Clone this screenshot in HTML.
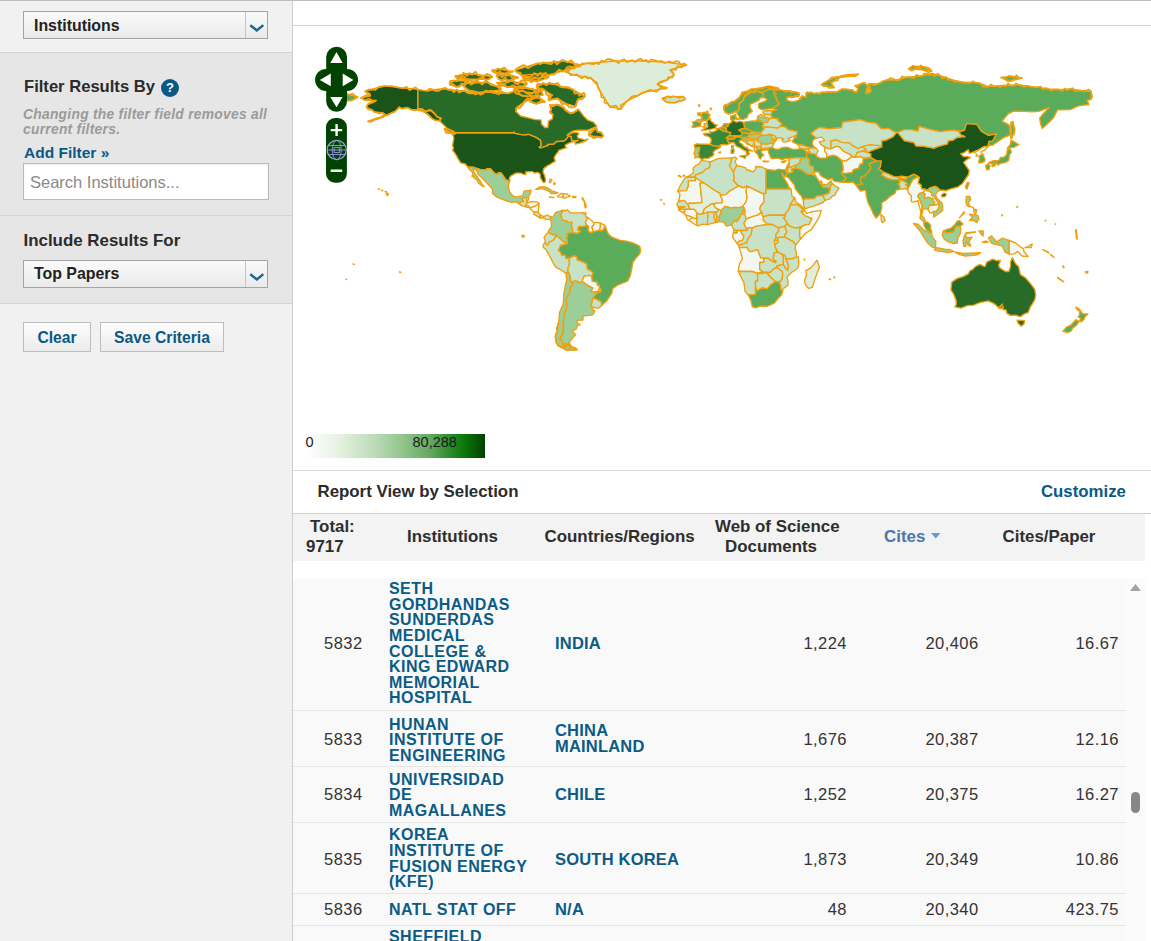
<!DOCTYPE html>
<html><head><meta charset="utf-8">
<style>
*{box-sizing:border-box;margin:0;padding:0}
html,body{width:1151px;height:941px;overflow:hidden;background:#fff;font-family:"Liberation Sans",sans-serif;color:#333}
.a{position:absolute;white-space:nowrap}
#side{position:absolute;left:0;top:0;width:293px;height:941px;background:#f1f1f1;border-right:1px solid #cdcdcd}
.sec{position:absolute;left:0;width:292px;background:#e6e6e6;border-top:1px solid #d2d2d2}
.sel{position:absolute;left:23px;width:245px;height:28px;border:1px solid #a4a4a4;background:linear-gradient(#fafafa,#eaeaea)}
.sel .t{position:absolute;left:10px;top:4px;font-weight:bold;font-size:15.9px;color:#222}
.sel .btn{position:absolute;right:0;top:0;width:22px;height:26px;border-left:1px solid #c4c4c4}
.b{font-weight:bold}
.blue{color:#0a5985}
.btnx{position:absolute;height:30px;border:1px solid #bdbdbd;background:linear-gradient(#fdfdfd,#ececec);font-weight:bold;font-size:15.7px;color:#0a5985;text-align:center;line-height:28px}
.hd{font-weight:bold;font-size:16.9px;color:#2e2e2e}
.row{position:absolute;left:293px;width:833px;background:#f9f9f9;border-bottom:1px solid #e6e6e6}
.num{font-size:16.5px;letter-spacing:0.45px;color:#333}
.inst{font-weight:bold;font-size:16px;letter-spacing:0.45px;color:#0b5b87}
.ctry{font-weight:bold;font-size:16.5px;letter-spacing:0.2px;color:#0b5b87}
</style></head><body>
<div id="side">
  <div style="position:absolute;left:0;top:0;width:293px;height:1px;background:#bdbdbd"></div>
  <div class="sel" style="top:11px"><span class="t a" style="top:5px">Institutions</span><span class="btn"><svg width="22" height="26" style="position:absolute;left:0;top:0"><path d="M4.3 13.3 L10.8 18.4 L17.3 13.1" fill="none" stroke="#1a6593" stroke-width="2.5"/></svg></span></div>
  <div class="sec" style="top:52px;height:164px">
    <div class="a b" style="left:24px;top:24px;font-size:16.6px;color:#2b2b2b">Filter Results By</div>
    <div class="a" style="left:161px;top:26.3px;width:18px;height:18px;border-radius:50%;background:#0a5886;color:#fff;font-weight:bold;font-size:13px;text-align:center;line-height:18px">?</div>
    <div class="a b" style="left:23px;top:53.8px;font-size:13.8px;letter-spacing:0.28px;font-style:italic;color:#9a9a9a;line-height:15.6px;white-space:normal;width:268px">Changing the filter field removes all current filters.</div>
    <div class="a b blue" style="left:24px;top:90.5px;font-size:15.5px">Add Filter »</div>
    <div class="a" style="left:23px;top:110px;width:246px;height:37px;border:1px solid #b9b9b9;background:#fff;box-shadow:inset 0 1px 2px rgba(0,0,0,.08)"><span class="a" style="left:6px;top:9px;font-size:16.5px;color:#8a8a8a">Search Institutions...</span></div>
  </div>
  <div class="sec" style="top:215px;height:89px">
    <div class="a b" style="left:23.5px;top:14.6px;font-size:16.9px;color:#2b2b2b">Include Results For</div>
    <div class="sel" style="top:44.4px;height:28px"><span class="t a">Top Papers</span><span class="btn"><svg width="22" height="26" style="position:absolute;left:0;top:0"><path d="M4.3 13.3 L10.8 18.4 L17.3 13.1" fill="none" stroke="#1a6593" stroke-width="2.5"/></svg></span></div>
  </div>
  <div style="position:absolute;left:0;top:303px;width:292px;height:1px;background:#d2d2d2"></div>
  <div class="btnx" style="left:23px;top:322px;width:68px;line-height:30px">Clear</div>
  <div class="btnx" style="left:100px;top:322px;width:124px;line-height:30px">Save Criteria</div>
</div>

<div style="position:absolute;left:293px;top:0;width:858px;height:1px;background:#bdbdbd"></div>
<div style="position:absolute;left:293px;top:25px;width:858px;height:1px;background:#d4d4d4"></div>

<!-- MAP -->
<div id="map" style="position:absolute;left:293px;top:26px;width:858px;height:444px;overflow:hidden">
<!--MAP--><svg width="858" height="444" style="position:absolute;left:0;top:0"><g stroke="#f0a00c" stroke-width="1.35" stroke-linejoin="round"><path fill="#1b5418" d="M159.1 107.9 162.2 106.7 221.1 106.7 221.1 105.9 222.2 107.3 228.7 108.6 232.7 108.8 235.2 108.2 242.8 111.1 244.2 111.9 247.6 114.4 248.4 119.2 246.3 121.3 247.6 121.9 254.9 119.4 254.5 118.4 260.8 118.0 263.3 115.5 270.7 115.0 272.3 114.2 275.5 110.0 278.4 110.7 278.4 113.6 280.1 115.5 275.9 117.1 272.3 119.0 272.6 121.7 273.8 121.7 270.7 122.6 265.6 124.5 265.2 125.9 263.5 127.8 262.1 129.9 261.2 132.0 262.3 135.3 259.6 136.6 257.0 138.5 254.5 139.7 250.7 142.6 249.9 145.8 251.6 149.5 252.6 153.7 252.0 156.4 250.5 156.6 249.1 154.6 247.2 151.4 247.2 148.1 244.7 146.4 241.5 147.0 239.2 145.6 235.9 145.6 232.7 146.0 233.1 148.5 230.6 148.3 227.7 147.2 223.7 147.0 221.4 147.9 217.6 150.2 216.4 152.0 216.8 155.0 212.8 153.9 210.3 150.2 208.0 146.8 205.2 147.0 204.0 148.5 201.5 147.2 197.3 142.6 193.7 142.6 193.7 143.7 187.6 143.7 179.9 141.2 175.0 141.2 172.3 138.0 167.7 136.8 165.0 132.6 163.7 130.1 161.0 125.9 159.7 124.7 160.4 121.5 159.5 119.6 160.8 112.5 160.4 110.2ZM124.9 63.5 119.7 62.6 110.2 62.2 101.9 60.9 92.2 60.1 85.1 61.5 78.8 63.4 72.1 65.1 76.7 67.6 77.3 69.9 68.1 72.0 72.5 74.3 83.0 74.5 79.8 76.4 74.6 78.5 73.5 81.4 78.8 83.7 80.9 85.8 89.3 86.6 91.4 87.9 87.2 92.1 80.9 94.2 75.0 95.4 81.9 92.9 89.3 90.4 97.7 87.3 102.1 85.4 106.1 81.2 109.2 82.7 114.0 81.6 118.6 83.7 124.9 83.7 128.1 84.5 132.3 86.6 135.4 88.9 138.6 92.1 141.7 94.2 146.7 94.8 148.0 92.3 144.2 90.8 140.9 87.0 137.5 84.1 134.4 84.7 132.3 85.4 128.9 83.0 124.9 83.1Z"/><path fill="#286b28" d="M162.0 106.7 158.9 104.6 154.3 102.9 152.2 100.4 148.0 96.2 146.7 94.8 148.0 92.3 144.2 90.8 140.9 87.0 137.5 84.1 134.4 84.7 132.3 85.4 128.9 83.0 124.9 83.1 124.9 63.5 134.4 65.1 139.6 63.6 149.0 62.8 158.5 63.8 169.0 64.9 179.4 67.0 194.1 65.9 202.5 67.0 215.1 67.4 219.3 65.9 223.5 63.8 231.9 65.9 240.3 67.0 243.4 63.8 248.6 64.9 249.7 69.1 239.2 70.1 238.2 73.2 230.8 76.4 223.5 81.6 223.1 85.8 227.7 90.0 236.1 92.1 242.4 93.7 248.0 93.9 248.6 98.3 251.8 101.5 254.9 101.5 255.4 95.2 259.1 93.1 260.0 88.9 257.0 86.2 258.1 83.7 257.0 78.9 265.4 78.9 270.7 81.6 274.9 85.8 280.1 86.8 284.3 84.1 285.3 83.1 290.6 90.0 294.8 94.2 300.4 96.2 303.8 100.0 301.1 101.7 294.8 104.2 286.4 104.2 281.1 104.6 277.0 106.7 273.8 109.2 280.1 106.7 284.3 106.5 286.0 107.7 284.3 109.8 284.9 111.9 291.6 113.8 294.8 113.0 292.7 115.0 286.4 117.1 282.6 118.2 281.8 116.1 285.3 114.4 280.1 114.8 278.4 113.6 278.4 110.7 275.5 110.0 272.3 114.2 270.7 115.0 263.3 115.5 260.8 118.0 254.5 118.4 254.9 119.4 247.6 121.9 246.3 121.3 248.4 119.2 247.6 114.4 244.2 111.9 242.8 111.1 235.2 108.2 232.7 108.8 228.7 108.6 222.2 107.3 221.1 105.9 221.1 106.7ZM244.5 57.8 259.1 57.8 278.2 62.8 292.1 70.3 285.1 73.2 282.6 80.4 273.0 77.6 264.4 72.4 255.8 74.3 259.1 69.1 252.2 64.7 246.1 62.8ZM156.6 58.6 161.0 54.6 175.7 55.1 172.1 59.0 162.7 60.7ZM170.4 57.6 183.4 56.3 195.6 56.7 203.6 60.3 207.8 63.8 195.6 65.5 184.3 66.4 174.8 63.8 171.3 61.1ZM162.2 49.8 176.5 47.3 199.2 50.7 195.6 53.4 173.2 53.0 162.7 50.7ZM198.7 44.2 207.8 43.4 219.9 45.5 213.0 47.3 200.8 45.9ZM203.6 49.8 216.6 48.6 225.2 51.5 218.2 54.2 206.1 53.4ZM222.0 44.2 244.5 37.3 272.1 35.2 286.2 38.8 272.1 44.2 258.3 48.4 244.5 52.6 230.4 51.3ZM230.4 49.2 252.8 47.1 255.6 51.3 244.5 55.5 231.9 54.4ZM203.6 56.7 216.6 55.1 234.0 57.6 230.4 62.0 216.6 61.1 207.8 59.5ZM220.8 62.8 234.0 62.0 247.0 65.5 242.6 70.7 229.6 69.9 222.6 67.2ZM239.2 71.6 246.5 71.6 251.8 75.8 243.4 77.8 237.1 75.3ZM296.0 109.6 303.2 101.3 304.4 105.6 308.2 106.5 310.3 109.8 308.4 111.7 304.2 110.7 298.1 109.8ZM162.0 108.2 157.4 106.9 151.6 102.9 154.3 102.7 160.6 105.6Z"/><path fill="#dcedd9" d="M272.1 45.9 283.7 40.4 294.8 37.1 322.7 35.0 350.4 35.0 374.0 36.3 393.5 39.0 377.0 44.0 381.0 48.8 374.0 54.2 364.4 58.4 374.0 62.0 351.8 66.1 344.9 69.7 333.8 75.1 328.1 82.9 317.0 80.8 311.6 72.4 307.4 65.5 304.6 59.9 297.5 51.7 280.9 48.8Z"/><path fill="#c7e2c6" d="M369.2 72.2 374.5 70.3 382.9 70.7 390.2 70.5 392.3 73.2 389.1 74.7 381.4 76.6 373.0 75.8 370.3 73.7Z"/><path fill="#9ccf97" d="M175.0 141.2 179.9 141.2 187.6 143.7 193.7 143.7 193.7 142.6 197.3 142.6 201.5 147.2 204.0 148.5 205.2 147.0 208.0 146.8 210.3 150.2 212.8 153.9 216.8 155.0 215.7 158.3 215.5 162.3 216.8 166.0 219.3 169.4 222.4 171.1 227.7 170.2 229.8 169.4 231.0 165.2 238.2 164.2 237.1 168.3 235.4 170.4 233.7 171.9 229.8 171.9 229.8 173.0 228.9 173.0 230.9 175.5 228.2 175.5 227.2 177.2 227.2 178.7 223.7 175.9 218.2 176.4 214.0 175.0 208.8 173.2 203.6 170.9 199.4 167.3 199.8 164.2 198.3 161.7 193.1 156.4 189.9 152.7 185.3 148.5 183.6 144.3 179.9 142.6 180.9 146.0 183.0 148.9 185.3 152.7 187.2 154.8 189.1 158.5 191.2 160.6 189.3 160.0 185.5 157.3 184.3 154.3 181.1 152.0 181.3 150.6 179.0 150.6 179.9 146.6 175.9 143.3Z"/><path fill="#c7e2c6" d="M227.2 178.7 227.2 177.2 228.2 175.5 230.9 175.5 228.9 173.0 229.8 173.0 229.8 171.9 233.7 171.9 233.7 175.9 235.6 176.3 233.5 177.8 233.2 179.0 231.7 180.4 228.9 179.9Z"/><path fill="#f2f7f1" d="M233.7 171.6 235.4 170.4 235.9 172.5 234.2 175.9 233.7 175.9Z"/><path fill="#f2f7f1" d="M233.2 179.0 233.5 177.8 235.6 176.3 240.3 175.7 244.5 176.1 246.2 177.8 242.4 179.8 238.8 181.3 237.5 182.0 236.5 181.1 235.0 180.0Z"/><path fill="#f2f7f1" d="M231.7 180.4 233.2 179.0 235.0 180.0 236.5 181.1 234.4 181.5Z"/><path fill="#f2f7f1" d="M237.5 182.0 238.8 181.3 242.4 179.8 246.2 177.8 245.5 181.9 245.1 186.1 240.9 185.9 239.2 184.4 236.7 182.1Z"/><path fill="#c7e2c6" d="M240.9 185.9 245.1 186.1 247.4 189.0 246.8 192.2 244.5 190.3 240.7 188.2Z"/><path fill="#c7e2c6" d="M246.8 192.2 247.4 189.0 250.7 190.7 253.9 189.0 258.3 190.9 258.7 192.6 256.2 193.4 252.8 193.6 251.8 192.2 248.6 192.0Z"/><path fill="#9ccf97" d="M242.6 163.3 246.5 161.2 250.7 160.6 254.9 162.1 259.1 164.8 265.0 166.9 262.3 167.5 257.7 167.5 257.0 165.8 251.8 163.5 250.3 162.9 248.2 162.7 245.3 163.3Z"/><path fill="#f2f7f1" d="M264.4 170.6 267.9 167.5 270.2 167.7 270.2 171.5 268.6 171.1 264.6 170.9Z"/><path fill="#f2f7f1" d="M270.2 167.7 273.8 167.9 277.4 170.2 273.8 171.1 270.9 172.3 270.2 171.5Z"/><path fill="#f2f7f1" d="M256.2 170.9 260.8 171.5 259.6 171.7 256.4 171.1Z"/><path fill="#f2f7f1" d="M279.7 170.4 283.0 170.6 282.8 171.5 279.7 171.5Z"/><path fill="#f2f7f1" d="M257.0 153.1 259.1 153.7 257.5 156.8 256.4 156.4ZM261.2 156.2 262.3 157.9 260.8 158.5Z"/><path fill="#f2f7f1" d="M288.9 172.3 289.7 171.7 292.3 177.1 293.1 179.8 292.9 181.9 292.1 181.7 291.6 178.6 291.2 175.7Z"/><path fill="#9ccf97" d="M258.3 190.9 259.3 192.0 260.8 189.7 262.3 186.9 265.0 185.7 266.9 185.5 269.2 184.2 271.1 184.3 269.0 185.9 267.9 190.1 268.8 191.5 268.8 193.6 271.7 194.5 273.6 194.6 275.1 196.4 279.1 196.1 278.4 198.7 279.5 202.0 279.5 204.5 280.3 206.6 274.9 207.4 273.8 207.8 274.9 210.1 273.8 211.2 274.6 217.9 272.3 217.0 268.6 214.1 266.3 211.8 262.7 209.3 258.3 208.3 255.4 206.2 255.8 204.1 258.5 200.7 258.3 195.7 257.2 194.1Z"/><path fill="#c7e2c6" d="M271.1 184.3 273.4 184.9 274.2 183.6 277.6 186.9 282.0 186.9 286.4 186.9 290.6 186.7 292.7 188.2 292.7 190.9 294.8 191.3 293.5 194.1 292.5 196.6 293.3 198.2 294.6 199.7 288.9 200.7 285.8 200.5 284.7 204.1 287.7 204.5 286.4 206.6 283.2 207.6 280.3 206.6 279.5 204.5 279.5 202.0 278.4 198.7 279.1 196.1 275.1 196.4 273.6 194.6 271.7 194.5 268.8 193.6 268.8 191.5 267.9 190.1 269.0 185.9Z"/><path fill="#f2f7f1" d="M294.8 191.3 297.9 194.1 300.7 196.6 300.9 198.7 299.0 200.7 300.2 205.8 297.3 206.6 295.4 205.3 295.0 203.0 295.6 200.9 294.6 199.7 293.3 198.2 292.5 196.6 293.5 194.1Z"/><path fill="#f2f7f1" d="M300.7 196.6 305.3 196.6 307.4 197.2 307.4 201.6 306.1 204.3 303.0 205.1 300.2 205.8 299.0 200.7 300.9 198.7Z"/><path fill="#f2f7f1" d="M307.4 197.2 311.6 199.1 312.4 200.5 309.7 204.5 306.1 204.3 307.4 201.6Z"/><path fill="#c7e2c6" d="M255.4 206.2 252.6 209.1 251.0 211.4 252.2 214.3 252.2 216.2 252.8 218.1 254.7 219.3 256.2 216.2 260.0 214.5 262.7 211.0 262.7 209.3 258.3 208.3Z"/><path fill="#c7e2c6" d="M252.2 216.2 250.1 218.9 250.3 221.6 253.3 224.1 256.6 230.0 260.6 237.9 262.9 241.3 268.6 244.2 273.0 247.5 274.9 245.9 275.1 241.7 276.3 239.0 276.5 235.2 274.6 232.0 272.6 232.1 272.6 229.0 268.8 229.0 267.1 225.4 265.4 224.6 267.5 219.5 273.8 217.9 274.6 217.9 272.3 217.0 268.6 214.1 266.3 211.8 262.7 209.3 262.7 211.0 260.0 214.5 256.2 216.2 254.7 219.3 252.8 218.1Z"/><path fill="#5aab5a" d="M312.4 200.5 314.1 205.3 315.8 208.5 318.9 211.2 327.3 214.3 333.6 215.2 339.9 216.8 346.6 220.0 347.6 224.0 346.8 227.9 343.0 232.1 339.9 236.3 338.8 242.5 337.3 249.9 334.6 255.1 330.0 257.0 325.2 258.8 319.9 262.4 318.7 267.6 315.8 271.8 313.7 274.9 308.6 279.6 308.2 275.8 304.0 273.7 299.8 272.2 303.6 267.4 308.0 265.3 307.8 262.6 306.1 262.6 306.7 259.3 304.4 259.3 303.8 256.1 299.2 255.3 298.6 250.5 300.0 247.1 298.6 245.3 294.2 243.2 293.7 237.9 290.6 236.3 287.7 235.2 284.3 234.0 283.5 230.6 280.9 229.8 276.5 232.3 274.6 232.0 272.6 232.1 272.6 229.0 268.8 229.0 267.1 225.4 265.4 224.6 267.5 219.5 273.8 217.9 274.6 217.9 273.8 211.2 274.9 210.1 273.8 207.8 274.9 207.4 280.3 206.6 283.2 207.6 286.4 206.6 287.7 204.5 284.7 204.1 285.8 200.5 288.9 200.7 294.6 199.7 295.6 200.9 295.0 203.0 295.4 205.3 297.3 206.6 300.2 205.8 303.0 205.1 306.1 204.3 309.7 204.5Z"/><path fill="#c7e2c6" d="M274.6 232.0 276.5 232.3 280.9 229.8 283.5 230.6 284.3 234.0 287.7 235.2 290.6 236.3 293.7 237.9 294.2 243.2 298.6 245.3 300.0 247.1 298.6 250.5 296.7 249.4 291.2 250.1 290.0 253.0 289.3 255.7 285.8 256.8 284.3 255.3 281.6 254.7 279.9 256.5 278.4 257.0 277.6 254.0 276.7 249.2 275.7 246.7 274.9 245.9 275.1 241.7 276.3 239.0 276.5 235.2Z"/><path fill="#f2f7f1" d="M298.6 250.5 299.2 255.3 303.8 256.1 304.4 259.3 306.7 259.3 306.1 262.6 305.7 264.9 303.2 266.2 297.7 265.7 299.8 262.2 294.8 259.3 289.3 255.7 290.0 253.0 291.2 250.1 296.7 249.4Z"/><path fill="#c7e2c6" d="M308.6 279.6 305.5 282.1 302.7 282.0 299.4 281.0 298.1 279.1 298.8 276.0 299.8 272.2 304.0 273.7 308.2 275.8Z"/><path fill="#9ccf97" d="M285.8 256.8 289.3 255.7 294.8 259.3 299.8 262.2 297.7 265.7 303.2 266.2 305.7 264.9 308.0 265.3 303.6 267.4 299.8 272.2 298.8 276.0 298.1 279.1 297.9 281.2 300.7 284.1 301.7 285.2 299.8 288.9 290.0 290.2 290.0 294.0 284.3 294.4 284.1 296.9 287.2 298.6 284.3 300.0 283.2 303.1 279.1 305.2 282.6 308.8 278.4 313.4 275.9 316.9 277.2 318.4 269.8 317.8 269.0 315.1 266.9 312.1 268.8 309.2 269.8 306.9 270.2 303.1 270.5 300.0 270.0 297.1 270.7 292.7 271.3 287.7 273.0 284.3 273.8 278.1 272.8 273.9 274.2 270.8 276.7 265.9 277.4 261.1 279.5 259.3 279.9 256.5 281.6 254.7 284.3 255.3ZM276.7 319.0 284.1 323.6 280.1 324.0 276.7 323.8Z"/><path fill="#9ccf97" d="M273.0 247.5 273.6 253.8 272.6 258.4 270.7 268.7 270.2 278.1 266.5 286.4 266.1 292.7 265.6 296.5 264.8 299.8 264.4 305.2 262.3 310.5 263.3 316.7 265.4 319.9 270.7 321.5 273.8 319.9 277.2 318.4 269.8 317.8 269.0 315.1 266.9 312.1 268.8 309.2 269.8 306.9 270.2 303.1 270.5 300.0 270.0 297.1 270.7 292.7 271.3 287.7 273.0 284.3 273.8 278.1 272.8 273.9 274.2 270.8 276.7 265.9 277.4 261.1 279.5 259.3 279.9 256.5 278.4 257.0 277.6 254.0 276.7 249.2 275.7 246.7 274.9 245.9ZM276.7 319.0 276.7 323.8 272.8 324.0 267.5 320.9 273.8 319.5Z"/><path fill="#c7e2c6" d="M228.7 209.5 230.4 209.1 231.5 210.8 229.4 211.2Z"/><path fill="#f2f7f1" d="M290.8 188.0 292.7 186.5 292.7 188.0Z"/><path fill="#5aab5a" d="M435.3 87.9 438.4 87.3 442.6 85.4 444.5 85.8 446.2 82.7 446.4 80.1 446.0 77.4 450.0 74.5 451.0 71.8 455.2 68.0 458.3 65.9 463.7 64.8 466.7 65.9 470.9 65.5 474.7 63.6 479.1 62.6 481.2 64.8 485.4 63.6 485.6 62.2 479.3 60.7 474.7 60.3 464.6 62.4 458.3 63.2 452.1 65.9 447.9 69.1 445.8 72.2 441.6 75.3 436.3 77.4 431.1 79.5 431.1 83.7 432.1 86.0Z"/><path fill="#5aab5a" d="M444.5 85.8 443.9 86.8 445.8 90.0 447.4 93.1 450.4 93.3 454.2 91.4 455.4 88.1 459.4 85.2 457.3 82.2 456.9 78.5 461.5 76.4 465.7 74.3 467.2 71.8 471.2 71.6 470.1 70.1 470.7 67.8 463.7 64.8 458.3 65.9 455.2 68.0 451.0 71.8 450.0 74.5 446.0 77.4 446.4 80.1 446.2 82.7Z"/><path fill="#5aab5a" d="M471.2 71.6 470.1 70.1 470.7 67.8 463.7 64.8 466.7 65.9 470.9 65.5 474.7 63.6 479.1 62.6 481.2 64.8 480.4 67.0 483.5 67.6 481.4 69.3 483.7 71.8 483.3 73.7 486.7 77.6 482.5 80.6 478.9 82.7 474.1 83.1 468.4 83.7 465.5 81.6 465.7 77.4 472.0 75.3 474.1 73.2Z"/><path fill="#5aab5a" d="M437.6 90.4 442.8 88.5 442.6 91.0 443.5 91.4 441.4 94.2 440.3 94.5 438.6 94.4 437.6 93.1ZM443.7 93.7 447.0 92.9 447.0 92.1 444.1 92.3Z"/><path fill="#286b28" d="M408.6 104.5 413.3 104.0 418.5 103.1 423.5 102.1 422.5 100.8 424.3 99.2 421.2 98.1 420.4 97.1 417.9 95.0 417.2 92.9 416.0 92.7 414.3 94.2 413.7 94.4 414.3 96.4 414.3 97.5 414.7 100.4 414.3 101.3 411.2 102.5Z"/><path fill="#c7e2c6" d="M414.3 97.5 411.0 97.7 411.8 99.8 409.5 100.8 412.2 101.3 414.3 101.3 414.7 100.4Z"/><path fill="#5aab5a" d="M417.2 92.9 415.4 92.1 416.8 88.9 414.3 86.6 410.1 86.6 407.6 88.9 408.9 91.4 408.4 93.5 410.1 94.6 413.7 94.4 414.3 94.2 416.0 92.7Z"/><path fill="#5aab5a" d="M408.0 100.0 407.6 97.7 408.0 96.2 404.9 96.0 403.6 95.0 405.3 93.7 403.0 94.2 402.6 95.6 399.6 95.8 399.8 97.3 400.7 99.2 398.8 100.4 400.0 101.5 403.8 100.8 407.2 100.0Z"/><path fill="#9ccf97" d="M408.0 96.2 409.1 95.0 407.6 93.7 405.3 93.7 403.6 95.0 404.9 96.0Z"/><path fill="#3a883a" d="M425.8 102.3 429.4 104.6 432.8 105.6 437.8 106.7 436.5 109.6 433.2 112.1 435.3 113.2 434.4 114.8 436.5 116.7 436.3 117.6 433.6 119.0 430.7 118.4 427.1 119.0 427.3 120.5 424.2 120.3 420.6 119.9 416.8 118.4 418.1 115.7 418.1 112.8 416.0 110.7 411.2 109.0 410.7 107.5 414.3 107.1 417.2 107.5 416.6 105.2 418.1 105.9 420.8 105.6 423.7 104.2 424.0 102.7ZM438.6 119.4 440.5 119.6 440.1 122.6 438.8 122.2Z"/><path fill="#3a883a" d="M427.3 120.5 424.2 120.3 420.6 119.9 416.8 118.4 412.2 118.2 405.9 118.0 403.8 117.8 401.1 119.2 401.9 121.3 403.6 121.5 406.8 121.5 406.1 123.4 405.9 126.1 404.9 126.5 405.9 129.3 404.9 131.4 407.4 132.2 408.9 133.9 411.4 132.4 416.0 132.2 417.2 130.9 419.1 130.5 421.0 128.2 420.0 126.5 422.5 123.8 425.2 122.6 427.3 121.5ZM425.6 126.3 427.7 125.9 427.3 127.0 426.1 126.8Z"/><path fill="#9ccf97" d="M401.9 121.3 403.6 121.5 406.8 121.5 406.1 123.4 405.9 126.1 404.9 126.5 405.9 129.3 404.9 131.4 401.7 131.8 402.1 128.6 400.7 128.0 401.9 125.1 402.4 123.0Z"/><path fill="#5aab5a" d="M425.8 102.3 427.7 101.7 431.1 101.5 432.8 102.5 433.4 103.8 432.8 105.6 429.4 104.6Z"/><path fill="#5aab5a" d="M427.7 101.7 430.0 99.4 431.1 97.7 435.7 97.7 435.3 100.0 433.2 100.8 433.4 102.9 432.8 102.5 431.1 101.5Z"/><path fill="#286b28" d="M433.4 102.9 433.2 100.8 435.3 100.0 435.7 97.7 438.6 96.4 438.6 94.4 440.3 94.5 443.5 96.2 446.8 95.2 450.4 96.4 450.8 97.7 451.2 99.2 452.1 102.3 450.6 102.5 446.0 104.0 449.5 107.1 447.9 109.8 442.6 109.8 440.7 109.8 436.5 109.6 437.8 106.7 434.0 105.6 433.4 103.8Z"/><path fill="#5aab5a" d="M436.5 109.6 440.7 109.8 440.5 110.7 442.6 111.1 441.8 112.5 439.5 113.2 435.3 113.2 433.2 112.1Z"/><path fill="#5aab5a" d="M440.7 109.8 447.9 109.8 449.5 107.1 452.1 106.7 456.0 107.5 456.5 108.8 455.2 109.8 454.4 111.1 449.3 111.9 446.2 110.9 442.6 111.1 440.5 110.7Z"/><path fill="#3a883a" d="M436.3 117.6 436.5 116.7 434.4 114.8 435.3 113.2 439.5 113.2 441.8 112.5 442.6 111.1 446.2 110.9 449.3 111.9 449.3 113.8 446.6 114.4 446.4 116.3 449.1 118.2 451.4 120.9 454.2 121.5 453.9 122.4 459.4 125.1 456.2 124.5 455.2 126.3 456.7 127.6 454.2 129.9 453.5 128.0 453.3 125.3 450.4 123.8 446.8 121.7 443.9 120.5 442.6 119.2 441.2 116.9 438.8 116.3ZM446.6 130.1 453.3 129.1 452.3 132.4ZM438.2 123.4 441.2 123.4 440.7 127.2 438.2 127.6Z"/><path fill="#5aab5a" d="M450.4 96.4 454.2 95.6 459.6 94.8 461.9 95.4 468.4 95.4 469.9 96.4 470.7 99.0 469.3 100.0 470.1 101.5 471.1 102.7 468.0 106.5 460.4 105.9 460.0 105.6 456.0 103.8 452.1 102.3 451.2 99.2 450.8 97.7Z"/><path fill="#5aab5a" d="M446.0 104.0 450.6 102.5 452.1 102.3 456.0 103.8 460.0 105.6 456.0 107.5 452.1 106.7 449.5 107.1Z"/><path fill="#9ccf97" d="M456.0 107.5 460.0 105.6 460.4 105.9 468.0 106.5 467.2 107.9 463.6 107.7 460.0 108.8 456.5 108.8Z"/><path fill="#9ccf97" d="M456.5 108.8 460.0 108.8 463.6 107.7 467.2 107.9 468.6 109.0 464.6 112.5 460.0 113.2 455.2 111.9 454.4 111.1 455.2 109.8Z"/><path fill="#9ccf97" d="M449.3 111.9 454.4 111.1 455.2 111.9 453.3 113.4 449.1 114.0Z"/><path fill="#9ccf97" d="M449.1 114.0 453.3 113.4 455.2 111.9 460.0 113.2 460.4 114.4 454.2 114.6 453.7 116.5 457.3 119.2 459.4 120.5 454.2 118.2 452.1 115.9 450.0 115.0Z"/><path fill="#c7e2c6" d="M454.2 114.6 460.4 114.4 461.7 115.3 460.9 118.2 459.4 120.1 457.3 119.2 453.7 116.5Z"/><path fill="#c7e2c6" d="M460.0 113.2 464.6 112.5 463.2 114.2 465.5 115.5 467.8 116.1 467.6 117.1 468.6 118.8 467.6 120.7 463.8 121.5 462.7 120.1 461.5 119.2 460.9 118.2 461.7 115.3 460.4 114.4Z"/><path fill="#c7e2c6" d="M459.4 120.5 461.3 121.5 462.7 120.1 461.5 119.2 460.9 118.2 459.4 120.1Z"/><path fill="#c7e2c6" d="M461.3 121.5 461.1 124.9 462.5 126.1 464.4 123.6 463.8 121.5 462.7 120.1Z"/><path fill="#c7e2c6" d="M463.8 121.5 467.6 120.7 468.8 122.8 464.4 123.6Z"/><path fill="#5aab5a" d="M462.5 126.1 465.1 129.1 465.9 131.8 467.6 133.0 469.3 129.9 470.9 129.3 468.6 127.0 468.0 124.9 470.7 124.0 475.1 123.8 475.8 121.9 472.0 122.2 468.8 122.8 464.4 123.6ZM469.9 134.9 475.8 135.5 470.9 135.9Z"/><path fill="#c7e2c6" d="M467.6 117.1 468.8 117.6 474.1 118.0 477.2 116.9 480.6 117.8 479.3 121.3 475.8 121.9 472.0 122.2 468.8 122.8 467.6 120.7 468.6 118.8Z"/><path fill="#9ccf97" d="M464.6 112.5 468.6 109.0 472.8 109.4 476.4 108.2 478.3 109.8 479.7 113.0 479.7 114.0 482.9 114.6 480.6 117.8 477.2 116.9 474.1 118.0 468.8 117.6 467.6 117.1 467.8 116.1 465.5 115.5 463.2 114.2Z"/><path fill="#c7e2c6" d="M476.4 108.2 479.3 108.8 481.8 109.8 483.5 111.9 479.7 114.0 479.7 113.0 478.3 109.8Z"/><path fill="#c7e2c6" d="M467.2 107.9 468.0 106.5 471.1 102.7 470.1 101.5 473.0 100.6 479.3 101.3 484.8 101.9 487.3 100.2 492.7 100.8 494.8 103.3 500.7 104.6 504.7 105.4 503.9 109.0 500.7 110.7 495.0 112.1 497.4 114.4 494.0 115.5 490.8 116.1 488.8 114.2 490.8 113.0 486.7 111.7 485.0 111.9 482.9 114.6 479.7 114.0 483.5 111.9 481.8 109.8 479.3 108.8 476.4 108.2 472.8 109.4 468.6 109.0Z"/><path fill="#c7e2c6" d="M469.9 96.4 472.0 96.4 474.7 95.8 476.4 92.7 479.7 91.9 485.4 92.9 485.2 94.6 489.2 97.7 487.3 100.2 484.8 101.9 479.3 101.3 473.0 100.6 470.1 101.5 469.3 100.0 470.7 99.0Z"/><path fill="#9ccf97" d="M464.6 92.7 464.6 91.9 466.7 91.2 473.0 91.6 476.4 92.7 474.7 95.8 472.0 96.4 469.9 96.4 468.4 95.4 465.3 93.7Z"/><path fill="#5aab5a" d="M461.9 95.4 468.4 95.4 465.3 93.7 462.5 94.4Z"/><path fill="#c7e2c6" d="M464.6 91.9 464.8 90.0 467.8 88.5 471.6 90.0 471.8 88.1 474.1 88.1 478.1 88.9 479.7 91.9 476.4 92.7 473.0 91.6 466.7 91.2Z"/><path fill="#c7e2c6" d="M469.9 85.4 472.4 84.7 479.3 84.7 478.3 87.9 478.1 88.9 474.1 88.1 471.8 88.1 469.9 86.8Z"/><path fill="#5aab5a" d="M475.1 124.2 475.8 121.9 479.3 121.3 481.6 123.0 486.0 123.2 489.8 121.3 494.0 121.1 499.2 123.2 503.4 123.4 507.6 122.4 511.8 123.2 512.0 124.5 514.5 126.1 513.5 126.8 513.9 129.1 513.5 131.8 509.5 131.6 506.6 131.6 500.7 132.0 497.6 132.2 496.1 134.1 496.5 132.8 492.9 132.2 489.4 133.7 484.8 132.2 480.4 132.6 477.8 132.0 476.6 128.8 475.5 126.5Z"/><path fill="#c7e2c6" d="M488.3 135.7 493.2 134.5 491.7 136.1 489.4 136.8Z"/><path fill="#c7e2c6" d="M504.5 118.4 508.7 118.8 512.7 120.1 518.3 121.7 515.0 122.8 511.8 123.2 507.6 122.4Z"/><path fill="#c7e2c6" d="M511.8 123.2 515.0 122.8 518.1 127.8 514.5 126.1 512.0 124.5Z"/><path fill="#c7e2c6" d="M515.0 122.8 518.3 121.7 522.5 121.7 525.2 124.9 523.1 128.8 518.1 127.8Z"/><path fill="#5aab5a" d="M405.3 78.9 406.8 78.9 406.3 80.6ZM417.2 82.4 418.5 82.2 417.9 83.9ZM413.5 85.4 415.1 85.2 414.3 86.2ZM404.9 87.0 407.6 86.8 406.1 89.6 404.7 88.9Z"/><path fill="#c7e2c6" d="M408.2 134.3 416.0 135.7 417.0 136.2 417.0 139.5 416.0 142.2 412.8 143.1 409.7 146.4 402.4 149.1 402.4 151.2 392.9 151.2 395.4 150.4 400.0 147.2 400.5 145.4 400.0 142.2 402.8 139.5 406.3 137.8Z"/><path fill="#c7e2c6" d="M402.4 151.2 402.4 154.8 395.4 154.8 395.4 160.0 393.3 164.6 384.7 165.2 387.0 160.0 390.2 154.6 392.9 151.2Z"/><path fill="#c7e2c6" d="M417.0 136.2 424.8 132.6 431.1 132.2 438.6 132.0 438.0 136.8 436.3 139.5 440.5 146.0 441.4 152.7 440.3 154.3 445.6 160.0 436.3 165.4 432.8 168.6 427.3 169.4 427.3 167.7 422.9 165.2 410.5 156.8 402.4 151.8 402.4 149.1 409.7 146.4 412.8 143.1 416.0 142.2 417.0 139.5Z"/><path fill="#c7e2c6" d="M438.6 132.0 442.2 131.1 443.9 132.2 442.0 135.5 443.9 139.5 442.0 142.6 440.5 146.0 436.3 139.5 438.0 136.8Z"/><path fill="#c7e2c6" d="M443.9 139.5 452.5 141.6 453.5 143.5 460.2 145.8 462.7 143.3 462.5 140.5 468.8 141.0 473.0 143.1 473.0 163.1 473.0 167.3 470.9 167.3 470.9 168.3 453.9 160.2 450.4 161.9 445.6 160.0 440.3 154.3 441.4 152.7 440.5 146.0 442.0 142.6Z"/><path fill="#5aab5a" d="M473.0 143.1 481.4 144.5 485.6 143.1 488.3 143.7 492.3 143.7 493.8 147.4 492.3 151.0 490.8 149.5 489.0 146.6 489.4 149.5 494.4 157.5 495.7 161.0 498.0 163.1 473.0 163.1Z"/><path fill="#f2f7f1" d="M384.7 165.2 387.0 168.3 386.0 174.2 386.4 175.5 391.2 174.4 395.0 178.6 396.7 176.9 398.2 177.5 409.1 176.7 407.0 157.1 410.5 156.8 402.4 151.8 402.4 154.8 395.4 154.8 395.4 160.0 393.3 164.6Z"/><path fill="#e0efdc" d="M395.0 178.6 396.7 176.9 398.2 177.5 409.1 176.7 407.0 157.1 410.5 156.8 422.9 165.2 427.3 167.7 427.3 169.4 429.6 174.0 429.0 176.9 423.3 177.1 421.0 178.0 418.3 178.0 416.4 179.4 414.3 180.7 411.4 183.0 409.7 187.8 407.6 188.2 404.2 187.6 402.8 185.3 401.3 183.4 396.7 183.2Z"/><path fill="#f2f7f1" d="M421.0 178.0 423.3 177.1 429.0 176.9 429.6 174.0 427.3 169.4 432.8 168.6 436.3 165.4 445.6 160.0 450.4 161.9 453.9 160.2 453.1 165.6 454.2 171.5 453.1 175.7 449.7 180.7 446.2 181.7 441.6 181.3 437.4 181.9 432.3 180.3 428.1 184.6 425.6 183.6 422.7 182.1 421.2 179.8Z"/><path fill="#f2f7f1" d="M453.9 160.2 470.9 168.3 470.9 176.3 467.8 179.8 466.7 183.0 468.6 186.1 464.6 189.2 460.2 190.3 453.1 193.2 452.1 189.2 450.0 188.2 452.3 186.5 451.0 181.9 449.7 180.7 453.1 175.7 454.2 171.5 453.1 165.6Z"/><path fill="#c7e2c6" d="M470.9 168.3 470.9 167.3 473.0 167.3 473.0 163.1 498.0 163.1 499.0 170.4 501.5 171.5 497.1 179.2 496.3 182.6 492.9 187.2 491.9 189.2 487.7 189.2 479.3 189.2 476.2 189.2 469.9 190.9 468.8 186.7 468.6 186.1 466.7 183.0 467.8 179.8 470.9 176.3Z"/><path fill="#c7e2c6" d="M469.9 190.9 476.2 189.2 479.3 189.2 487.7 189.2 491.9 189.2 492.9 187.2 492.1 191.1 490.2 192.0 491.7 193.0 494.6 197.8 491.7 200.3 485.2 201.8 481.4 199.7 478.1 198.4 473.7 197.8 470.3 194.5Z"/><path fill="#c7e2c6" d="M497.1 179.2 501.5 171.5 503.0 176.1 507.0 178.8 511.0 182.6 508.7 182.3 504.5 178.8 500.3 178.8Z"/><path fill="#c7e2c6" d="M496.3 182.6 497.1 179.2 500.3 178.8 504.5 178.8 508.7 182.3 509.5 184.0 508.3 186.1 511.8 189.5 518.9 192.4 516.0 198.7 512.0 198.9 508.7 200.7 504.1 202.0 500.5 201.6 496.1 199.9 494.6 197.8 491.7 193.0 490.2 192.0 492.1 191.1 492.9 187.2Z"/><path fill="#c7e2c6" d="M509.5 184.0 511.0 182.6 511.6 185.1 508.3 186.1Z"/><path fill="#f2f7f1" d="M511.6 185.1 513.9 187.4 519.2 185.7 528.2 184.4 527.5 187.4 525.5 192.4 522.3 197.6 518.1 203.9 512.9 207.0 507.8 212.7 506.6 211.0 506.6 203.2 508.7 200.7 512.0 198.9 516.0 198.7 518.9 192.4 511.8 189.5 508.3 186.1Z"/><path fill="#c7e2c6" d="M386.0 174.2 383.9 178.4 385.4 181.5 388.7 181.1 385.4 183.0 391.9 183.4 396.7 183.2 395.0 178.6 391.2 174.4 386.4 175.5Z"/><path fill="#f2f7f1" d="M385.4 180.7 391.7 180.7 391.7 181.3 385.4 181.5Z"/><path fill="#f2f7f1" d="M385.4 183.0 391.9 183.4 391.9 186.1 389.1 186.1 386.0 184.4Z"/><path fill="#f2f7f1" d="M389.1 186.1 391.9 186.1 391.9 183.4 396.7 183.2 401.3 183.4 402.8 185.3 404.2 187.6 403.4 189.7 404.5 191.5 401.7 192.8 399.0 191.3 396.9 190.3 392.9 189.2Z"/><path fill="#f2f7f1" d="M392.9 189.2 396.9 190.3 399.0 191.3 396.5 194.7 394.4 193.6Z"/><path fill="#f2f7f1" d="M396.5 194.7 399.0 191.3 401.7 192.8 404.5 191.5 403.4 195.5 404.9 199.9 400.7 197.6Z"/><path fill="#c7e2c6" d="M404.9 199.9 403.4 195.5 404.5 191.5 403.4 189.7 404.2 187.6 407.6 188.2 409.7 187.8 411.4 183.0 414.3 180.7 414.9 189.2 414.5 198.7 410.1 198.2Z"/><path fill="#e0efdc" d="M409.7 187.8 411.4 183.0 414.3 180.7 416.4 179.4 418.3 178.0 421.0 178.0 421.2 179.8 422.7 182.1 425.6 183.6 424.8 185.3 420.6 186.1 414.5 186.1Z"/><path fill="#c7e2c6" d="M414.3 198.7 414.9 189.2 414.5 186.1 420.6 186.1 421.0 191.3 423.1 196.4Z"/><path fill="#c7e2c6" d="M420.6 186.1 422.5 186.1 424.0 190.3 424.0 196.1 423.1 196.4 421.0 191.3Z"/><path fill="#c7e2c6" d="M422.5 186.1 424.8 185.3 425.6 183.6 428.1 184.6 428.1 187.4 426.3 190.3 426.3 195.7 424.0 196.1 424.0 190.3Z"/><path fill="#9ccf97" d="M426.3 195.7 426.3 190.3 428.1 187.4 428.1 184.6 432.3 180.3 437.4 181.9 441.6 181.3 446.2 181.7 449.7 180.7 451.0 181.9 450.4 185.1 447.9 189.2 446.2 192.4 444.1 195.5 441.2 194.9 438.6 199.1 433.4 200.1 430.5 196.1Z"/><path fill="#c7e2c6" d="M438.6 199.1 441.2 194.9 444.1 195.5 446.2 192.4 447.9 189.2 450.4 185.1 451.0 181.9 452.3 186.5 450.0 188.2 452.1 189.2 453.1 193.2 451.0 197.6 454.2 204.3 447.9 204.5 444.3 204.5 441.2 204.3Z"/><path fill="#f2f7f1" d="M451.0 197.6 453.1 193.2 460.2 190.3 464.6 189.2 468.6 186.1 468.8 186.7 469.9 190.9 470.3 194.5 473.7 197.8 478.1 198.4 475.1 198.7 468.4 199.3 463.6 200.1 459.4 201.8 455.2 201.6 454.2 204.3Z"/><path fill="#c7e2c6" d="M441.2 204.3 444.3 204.5 444.3 207.0 440.3 207.0Z"/><path fill="#f2f7f1" d="M440.3 207.0 444.3 207.0 444.3 204.5 447.9 204.5 448.3 206.6 451.0 210.1 449.5 214.3 445.8 215.4 443.9 217.3 439.5 211.2Z"/><path fill="#c7e2c6" d="M443.9 217.3 445.8 215.4 449.5 214.3 451.0 210.1 448.3 206.6 447.9 204.5 454.2 204.3 455.2 201.6 459.4 201.8 457.9 209.1 454.6 213.3 454.2 216.4 447.9 218.7 445.8 219.5Z"/><path fill="#c7e2c6" d="M445.8 219.5 447.9 218.7 454.2 216.4 454.6 213.3 457.9 209.1 459.4 201.8 463.6 200.1 468.4 199.3 475.1 198.7 478.1 198.4 481.4 199.7 485.2 201.8 486.0 204.5 482.9 208.7 482.7 212.0 481.4 215.0 482.0 218.5 482.5 221.6 484.6 226.2 481.2 226.9 480.2 232.1 481.4 235.0 483.1 234.6 482.5 236.9 478.3 234.6 474.9 232.1 470.9 232.3 470.7 231.9 467.8 232.1 466.5 229.0 464.6 223.7 458.3 225.8 455.2 224.4 454.2 221.4 446.2 221.6Z"/><path fill="#c7e2c6" d="M482.9 208.7 486.0 204.5 485.2 201.8 491.7 200.3 494.0 206.0 491.9 209.1 491.7 211.2 482.7 212.0Z"/><path fill="#c7e2c6" d="M491.7 200.3 494.6 197.8 496.1 199.9 500.5 201.6 504.1 202.0 508.7 200.7 506.6 203.2 506.6 211.0 507.8 212.7 502.8 218.9 499.7 215.4 491.7 211.2 491.9 209.1 494.0 206.0Z"/><path fill="#c7e2c6" d="M482.7 212.0 485.2 211.4 484.6 214.1 481.4 215.0Z"/><path fill="#f2f7f1" d="M481.4 215.0 484.6 214.1 485.2 216.0 482.0 218.5Z"/><path fill="#c7e2c6" d="M482.0 218.5 485.2 216.0 484.6 214.1 485.2 211.4 491.7 211.2 499.7 215.4 502.8 218.9 502.0 222.7 503.4 225.8 503.6 230.6 500.3 232.5 493.8 233.1 489.8 228.7 485.0 226.4 482.5 221.6Z"/><path fill="#f2f7f1" d="M446.2 221.6 454.2 221.4 455.2 224.4 458.3 225.8 464.6 223.7 466.5 229.0 467.8 232.1 470.7 231.9 470.9 236.3 466.7 236.3 466.7 243.0 469.7 245.9 464.4 247.3 459.2 245.5 450.0 245.5 445.3 245.3 446.2 238.4 449.3 232.7 448.3 227.9Z"/><path fill="#c7e2c6" d="M470.9 232.3 474.9 232.1 478.3 234.6 482.5 236.9 483.1 234.6 481.4 235.0 480.2 232.1 481.2 226.9 484.6 226.2 489.6 228.7 490.6 232.1 490.2 238.4 483.9 240.0 484.3 241.7 481.2 242.5 477.2 246.5 473.4 246.3 469.7 245.9 466.7 243.0 466.7 236.3 470.9 236.3Z"/><path fill="#c7e2c6" d="M489.6 228.7 491.9 229.2 493.2 233.3 495.7 240.0 494.6 244.6 492.5 242.5 490.2 238.4 490.6 232.1Z"/><path fill="#c7e2c6" d="M493.8 233.1 500.3 232.5 503.6 230.6 505.5 231.0 505.7 239.4 504.5 242.5 498.2 246.7 494.0 250.9 495.0 255.1 495.0 259.3 489.6 263.2 489.6 265.1 487.7 263.4 487.5 259.3 486.2 255.9 488.8 253.6 489.6 248.8 489.4 245.7 484.3 241.7 483.9 240.0 490.2 238.4 492.5 242.5 494.6 244.6 495.7 240.0 493.2 233.3Z"/><path fill="#c7e2c6" d="M473.4 246.3 477.2 246.5 481.2 242.5 484.3 241.7 489.4 245.7 489.6 248.8 488.8 253.6 486.2 255.9 482.3 255.5 478.3 251.9 475.1 248.8Z"/><path fill="#c7e2c6" d="M445.3 245.3 450.0 245.5 459.2 245.5 464.4 247.3 469.7 245.9 473.4 246.3 468.8 247.6 464.6 247.3 464.6 255.1 462.5 255.1 462.5 260.9 462.5 268.5 455.2 268.9 452.1 265.5 451.0 257.0 447.9 250.9Z"/><path fill="#c7e2c6" d="M462.5 255.1 464.6 255.1 464.6 247.3 468.8 247.6 473.4 246.3 475.1 248.8 478.3 251.9 482.3 255.5 477.2 259.3 474.5 262.8 468.8 262.0 464.2 265.1 462.5 260.9Z"/><path fill="#5aab5a" d="M455.2 268.9 462.5 268.5 462.5 260.9 464.2 265.1 468.8 262.0 474.5 262.8 477.2 259.3 482.3 255.5 486.2 255.9 487.5 259.3 487.7 263.4 489.6 265.1 488.5 269.3 485.6 271.8 481.4 277.0 477.2 279.1 474.3 280.2 467.8 280.2 462.5 281.8 459.2 280.6 458.3 276.0 456.7 271.6Z"/><path fill="#e0efdc" d="M524.0 234.2 526.5 241.5 525.0 244.6 521.3 255.1 519.2 261.4 515.4 262.4 512.2 258.2 511.6 254.0 513.5 249.9 512.9 244.6 517.7 241.9 520.8 238.4Z"/><path fill="#5aab5a" d="M485.4 63.6 489.8 64.3 496.1 64.7 506.6 67.6 505.5 70.3 500.3 71.2 493.6 71.4 494.0 74.3 499.2 75.8 505.5 74.3 508.7 70.1 512.9 71.2 513.5 66.4 521.3 67.6 531.7 66.4 535.9 65.9 544.3 65.9 548.5 63.2 559.0 63.8 563.2 66.6 565.3 62.8 562.1 59.7 571.6 56.9 574.7 59.7 572.6 67.0 577.9 64.9 575.8 57.6 584.2 58.0 589.4 55.5 594.7 53.8 603.0 54.0 615.6 51.1 626.1 50.1 639.3 47.5 647.1 49.6 658.6 53.6 668.0 55.9 685.5 56.9 695.3 60.7 710.0 59.5 725.9 59.0 739.3 60.7 755.5 63.0 766.6 63.6 777.1 63.0 787.6 64.5 798.1 65.3 798.1 73.2 793.9 74.3 796.0 78.5 785.5 79.9 777.1 83.7 764.5 83.9 762.4 87.9 760.3 92.1 756.1 96.2 749.2 102.5 747.7 98.3 746.7 92.1 749.8 88.3 756.1 81.6 745.6 85.4 739.3 85.8 726.8 85.2 720.5 85.2 715.2 87.9 708.9 95.2 715.2 98.3 716.3 99.4 717.3 108.8 710.0 111.9 699.5 119.2 696.4 119.2 694.7 120.7 695.9 115.3 699.5 115.0 703.3 108.2 695.3 109.4 689.0 105.6 688.0 105.0 683.8 98.3 673.3 97.7 671.6 104.0 667.6 105.6 665.3 105.0 659.7 104.2 647.1 105.6 638.7 103.8 626.1 100.4 625.1 105.2 617.7 103.6 611.4 103.6 604.7 106.3 600.9 105.6 595.7 102.5 588.4 102.9 583.1 97.3 574.7 96.2 567.4 93.7 558.0 95.0 549.6 96.2 548.5 101.5 535.9 102.9 526.5 101.3 521.3 104.6 518.1 107.7 523.4 112.1 520.2 113.8 519.2 117.1 520.4 120.3 522.5 121.7 518.3 121.7 512.7 120.1 508.7 118.8 504.5 118.4 499.2 115.7 501.3 111.9 503.9 110.9 500.7 110.7 503.9 109.0 504.7 105.4 500.7 104.6 494.8 103.3 492.7 100.8 487.3 100.2 489.2 97.7 485.2 94.6 485.4 92.9 479.7 91.9 478.1 88.9 478.3 87.9 479.3 84.7 484.1 83.9 480.6 82.9 478.9 82.7 482.5 80.6 486.7 77.6 483.3 73.7 483.7 71.8 481.4 69.3 483.5 67.6 480.4 67.0 481.2 64.8ZM43.1 65.3 53.6 68.0 62.0 70.1 64.7 71.0 61.0 73.2 57.8 74.7 47.3 74.3 43.1 73.2ZM530.7 60.1 541.2 61.5 538.0 56.5 546.4 51.3 559.0 50.3 565.3 48.2 554.8 48.6 542.2 51.3 533.8 55.5 528.6 58.6ZM615.6 42.9 630.3 44.0 638.7 45.0 630.3 40.9 619.8 39.8ZM707.9 51.3 718.4 50.3 728.9 51.9 718.4 54.9 712.1 53.4ZM718.4 113.0 721.5 105.6 719.8 95.6 717.7 97.3 718.6 105.6Z"/><path fill="#c7e2c6" d="M603.7 106.5 599.9 110.9 593.6 114.0 588.8 115.0 588.8 120.9 586.3 119.6 580.0 119.2 576.8 118.8 569.5 120.7 565.3 122.6 559.0 119.4 556.9 117.1 548.5 116.3 543.3 113.8 538.0 115.0 538.0 122.8 535.9 122.8 531.7 121.1 531.1 120.3 528.2 118.8 526.1 116.1 531.7 114.4 528.6 111.1 523.4 112.1 518.1 107.7 521.3 104.6 526.5 101.3 535.9 102.9 548.5 101.5 549.6 96.2 558.0 95.0 567.4 93.7 574.7 96.2 583.1 97.3 588.4 102.9 595.7 102.5 600.9 105.6Z"/><path fill="#c7e2c6" d="M538.0 115.0 543.3 113.8 548.5 116.3 556.9 117.1 559.0 119.4 565.3 122.6 569.5 120.7 573.7 123.8 569.5 125.1 564.2 126.5 562.1 131.4 560.1 130.9 555.9 127.8 550.6 125.5 548.5 123.0 546.4 120.9 543.3 120.3 538.0 122.8Z"/><path fill="#f2f7f1" d="M538.0 122.8 543.3 120.3 546.4 120.9 548.5 123.0 550.6 125.5 555.9 127.8 560.1 130.9 558.0 131.1 555.9 133.2 552.5 135.1 548.9 134.7 544.3 130.7 540.1 129.3 533.8 130.9 533.6 127.6 531.7 125.5 531.7 121.1 535.9 122.8Z"/><path fill="#c7e2c6" d="M588.8 120.9 586.3 119.6 580.0 119.2 576.8 118.8 569.5 120.7 573.7 123.8 568.4 125.5 574.7 126.5 577.9 124.9 582.1 123.4Z"/><path fill="#c7e2c6" d="M564.2 126.5 569.5 125.1 574.7 126.5 577.9 128.0 577.7 131.1 570.5 132.4 567.4 130.7 562.8 131.4 562.1 131.4Z"/><path fill="#f2f7f1" d="M548.3 146.6 550.2 143.5 548.9 134.7 552.5 135.1 555.9 133.2 558.0 131.1 560.1 130.9 562.1 131.4 562.8 131.4 567.4 130.7 570.5 132.4 577.7 131.6 570.5 132.8 570.1 135.1 569.5 137.8 567.2 138.2 566.3 140.1 565.9 142.4 563.2 142.8 560.3 143.9 559.4 146.6 551.7 147.7Z"/><path fill="#5aab5a" d="M549.8 156.4 552.7 156.4 560.1 156.0 561.1 157.3 563.6 159.8 565.3 158.3 569.7 158.1 567.4 155.4 568.4 151.2 571.6 150.0 574.7 146.6 577.0 144.1 577.9 141.4 575.8 138.0 583.7 134.9 578.9 132.2 577.7 131.6 570.5 132.8 570.1 135.1 569.5 137.8 567.2 138.2 566.3 140.1 565.9 142.4 563.2 142.8 560.3 143.9 559.4 146.6 551.7 147.7 548.3 146.6 550.6 150.0 553.3 152.3 552.3 153.5 550.2 154.3Z"/><path fill="#5aab5a" d="M563.6 159.8 565.3 162.5 567.4 165.2 572.6 164.2 573.3 169.4 574.7 175.9 577.9 182.3 580.6 188.4 583.1 192.2 584.6 190.5 587.3 187.6 588.8 181.9 588.8 176.7 593.6 173.6 597.8 169.8 602.0 167.3 603.0 164.2 607.2 163.1 606.4 158.9 605.1 157.9 607.2 156.4 606.2 153.9 608.9 154.3 613.5 156.6 614.4 158.5 612.5 158.7 613.9 159.6 614.8 163.1 616.5 160.0 618.1 156.8 619.8 153.7 624.0 151.4 624.6 150.2 620.9 148.1 615.6 150.6 613.5 151.0 608.9 150.2 606.6 150.4 605.3 153.7 598.8 153.5 593.6 151.8 588.6 148.9 590.5 146.0 585.6 142.6 587.3 141.2 588.4 134.9 583.7 134.9 575.8 138.0 577.9 141.4 577.0 144.1 574.7 146.6 571.6 150.0 568.4 151.2 567.4 155.4 569.7 158.1 565.3 158.3Z"/><path fill="#c7e2c6" d="M588.6 148.9 593.6 151.8 598.8 153.5 605.3 153.7 605.6 150.8 600.9 150.6 595.7 148.1 590.5 146.0Z"/><path fill="#f2f7f1" d="M606.8 152.3 613.5 153.1 613.5 151.0 608.9 150.2Z"/><path fill="#c7e2c6" d="M607.2 163.1 610.4 163.1 613.1 162.5 614.8 164.6 614.8 163.1 613.9 159.6 612.5 158.7 614.4 158.5 613.5 156.6 608.9 154.3 606.2 153.9 607.2 156.4 605.1 157.9 606.4 158.9Z"/><path fill="#c7e2c6" d="M587.9 188.6 591.1 191.3 592.1 194.5 589.6 196.8 588.4 194.9Z"/><path fill="#1b5418" d="M574.7 126.5 577.9 124.9 582.1 123.4 588.8 120.9 588.8 115.0 593.6 114.0 599.9 110.9 603.7 106.5 604.7 106.3 611.4 114.6 620.9 116.5 623.0 119.9 630.3 120.1 640.8 122.2 645.0 120.3 654.4 117.8 655.0 114.8 659.7 114.2 663.9 111.5 668.0 110.9 671.8 110.7 667.6 108.8 665.3 105.0 667.6 105.6 671.6 104.0 673.3 97.7 683.8 98.3 688.0 105.0 689.0 105.6 695.3 109.4 703.3 108.2 699.5 115.0 695.9 115.3 694.7 120.7 692.2 120.5 689.0 121.7 684.8 124.5 681.3 125.7 676.4 127.6 675.4 123.6 670.1 127.2 667.6 127.6 670.6 130.7 674.3 130.3 677.5 131.6 673.3 133.9 670.6 136.4 673.9 141.2 676.2 144.5 675.6 148.5 672.2 153.5 669.3 157.7 664.9 161.0 658.6 162.7 652.3 164.8 650.9 164.2 647.1 164.2 644.3 161.4 641.8 160.4 636.6 162.1 634.1 164.8 632.6 163.5 628.6 162.9 627.6 158.7 625.1 157.3 626.1 151.4 624.6 150.2 620.9 148.1 615.6 150.6 613.5 151.0 608.9 150.2 606.6 150.4 605.6 150.8 600.9 150.6 595.7 148.1 590.5 146.0 585.6 142.6 587.3 141.2 588.4 134.9 583.7 134.9 578.9 132.2 577.7 131.1 577.9 128.0 574.7 126.5ZM648.3 169.0 651.3 167.1 653.4 168.1 652.1 170.6 649.2 170.9Z"/><path fill="#5aab5a" d="M672.4 161.0 674.3 156.4 676.2 156.8 673.9 163.3Z"/><path fill="#c7e2c6" d="M604.7 106.3 611.4 103.6 617.7 103.6 625.1 105.2 626.1 100.4 638.7 103.8 647.1 105.6 659.7 104.2 665.3 105.0 667.6 108.8 671.8 110.7 668.0 110.9 663.9 111.5 659.7 114.2 655.0 114.8 654.4 117.8 645.0 120.3 640.8 122.2 630.3 120.1 623.0 119.9 620.9 116.5 611.4 114.6Z"/><path fill="#f2f7f1" d="M681.3 125.7 684.8 124.5 689.0 121.7 692.2 120.5 694.7 120.7 692.6 123.4 688.0 126.1 689.9 128.4 686.3 129.9 683.1 130.1 683.8 128.4Z"/><path fill="#5aab5a" d="M686.3 129.9 689.9 128.4 692.2 133.9 691.5 135.5 688.0 136.8 685.5 136.8 686.5 132.8Z"/><path fill="#5aab5a" d="M695.1 138.2 697.2 139.5 695.9 143.5 693.6 143.9 692.6 139.7ZM698.5 137.4 703.7 136.8 704.7 139.1 707.5 137.4 711.7 136.6 714.2 135.5 715.9 133.9 716.3 129.1 718.4 126.3 717.1 122.6 714.2 124.2 713.8 128.6 711.0 131.1 707.5 131.4 705.8 134.5 699.5 134.9 695.3 137.2ZM698.9 138.2 703.1 137.6 702.0 139.7 699.3 140.5ZM714.2 122.4 716.7 121.7 720.9 121.3 725.7 118.6 722.6 116.7 718.2 114.0 717.1 118.6Z"/><path fill="#5aab5a" d="M512.9 126.8 514.5 126.1 518.1 127.8 521.3 127.8 523.1 128.8 523.4 130.5 527.5 132.2 533.6 131.8 533.8 130.9 540.1 129.3 544.3 130.7 548.9 134.7 550.2 143.5 548.3 146.6 550.6 150.0 553.3 152.3 552.3 153.5 550.2 154.3 549.8 156.4 541.2 155.4 538.9 152.5 535.3 153.7 529.6 151.0 527.1 148.7 525.9 146.0 523.1 145.6 521.3 146.4 520.6 144.3 520.2 140.3 517.1 140.1 515.8 137.0 516.6 134.3 514.5 131.4 513.5 131.8 513.9 129.1Z"/><path fill="#9ccf97" d="M509.5 131.6 513.5 131.8 514.5 131.4 516.6 134.3 515.8 137.0 517.1 140.1 520.2 140.3 520.6 144.3 521.3 146.4 519.4 146.6 518.1 148.3 514.3 148.1 508.9 144.1 502.4 142.2 502.0 139.3 506.6 137.0 507.2 133.0Z"/><path fill="#c7e2c6" d="M496.1 134.1 497.6 132.2 500.7 132.0 506.6 131.6 509.5 131.6 507.2 133.0 506.6 137.0 502.0 139.3 497.8 141.6 495.9 140.8 496.1 138.5 495.9 136.8Z"/><path fill="#c7e2c6" d="M494.2 139.9 495.9 140.8 496.1 138.5 495.9 136.8Z"/><path fill="#9ccf97" d="M492.5 143.7 494.2 139.9 495.3 139.7 495.0 143.3 493.8 147.4Z"/><path fill="#c7e2c6" d="M495.0 143.3 495.3 139.7 495.9 140.8 497.8 141.6 502.0 139.3 502.4 142.2 498.2 143.3 500.3 145.4 497.8 146.6 494.0 147.7Z"/><path fill="#5aab5a" d="M493.2 150.4 494.0 147.7 497.8 146.6 500.3 145.4 498.2 143.3 502.4 142.2 508.9 144.1 514.3 148.1 518.1 148.3 519.4 146.6 522.1 149.5 524.6 152.9 525.9 154.8 527.1 157.5 528.8 158.5 529.6 161.2 536.1 161.9 537.2 163.1 535.9 167.3 529.6 169.4 523.4 170.2 521.3 172.7 518.1 172.9 511.6 172.5 510.4 174.8 508.7 170.4 506.2 167.7 502.4 163.1 501.3 158.9 498.6 155.6 496.1 152.3Z"/><path fill="#c7e2c6" d="M519.4 146.6 521.3 146.4 522.1 149.5 518.1 148.3Z"/><path fill="#9ccf97" d="M527.1 157.5 528.0 154.6 528.8 156.2 528.8 158.5Z"/><path fill="#9ccf97" d="M528.8 158.5 533.8 158.7 538.0 154.8 538.9 157.1 537.2 161.7 536.1 161.9 529.6 161.2Z"/><path fill="#c7e2c6" d="M538.9 157.1 541.8 159.6 546.0 162.1 543.3 166.3 541.8 169.4 539.3 170.2 536.4 173.2 532.0 174.4 529.6 169.4 535.9 167.3 537.2 163.1 537.2 161.7Z"/><path fill="#c7e2c6" d="M510.4 174.8 511.6 172.5 518.1 172.9 521.3 172.7 523.4 170.2 529.6 169.4 532.0 174.4 530.1 176.5 524.6 178.6 521.3 179.8 516.2 181.3 511.8 182.8 510.4 178.2Z"/><path fill="#f2f7f1" d="M614.8 164.6 615.6 167.3 618.3 169.8 618.3 175.7 620.4 176.1 625.3 174.6 625.5 178.0 627.4 184.0 627.8 188.2 629.3 180.9 628.2 177.3 627.2 174.0 624.8 170.4 626.1 167.7 630.3 166.5 632.6 163.5 628.6 162.9 627.6 158.7 625.1 157.3 626.1 151.4 624.6 150.2 624.0 151.4 619.8 153.7 618.1 156.8 616.5 160.0 614.8 163.1Z"/><path fill="#9ccf97" d="M624.8 170.4 627.2 174.0 628.2 177.3 629.3 180.9 627.8 188.2 626.9 192.2 628.2 193.4 630.7 195.7 632.6 196.1 630.9 191.8 628.6 189.7 630.1 183.0 632.2 182.6 635.3 183.6 635.8 180.7 636.4 179.2 641.2 179.2 641.8 176.3 640.2 174.6 640.2 172.7 636.6 171.7 634.7 171.1 631.3 172.5 632.2 168.1 630.3 166.5 626.1 167.7Z"/><path fill="#f2f7f1" d="M630.3 166.5 632.2 168.1 631.3 172.5 634.7 171.1 636.6 171.7 640.2 172.7 640.2 174.6 641.8 176.3 641.2 179.2 642.9 179.0 646.0 177.3 643.9 174.6 640.8 170.4 638.7 169.0 639.1 167.3 634.9 164.2 634.1 164.8 632.6 163.5Z"/><path fill="#9ccf97" d="M634.1 164.8 634.9 164.2 639.1 167.3 638.7 169.0 640.8 170.4 643.9 174.6 646.0 177.3 645.8 181.9 642.9 185.5 640.8 185.1 640.6 191.1 643.9 189.0 646.0 187.2 649.6 184.6 649.8 180.9 648.8 176.7 644.6 172.9 642.3 169.6 643.9 166.3 647.1 164.2 644.3 161.4 641.8 160.4 636.6 162.1Z"/><path fill="#f2f7f1" d="M635.3 183.6 635.8 180.7 636.4 179.2 641.2 179.2 642.9 179.0 646.0 177.3 645.8 181.9 642.9 185.5 640.8 185.1 638.7 187.2 636.6 186.1Z"/><path fill="#5aab5a" d="M630.7 195.7 632.6 196.1 634.7 196.1 637.4 198.9 637.4 202.8 639.1 206.2 637.4 206.4 633.0 203.2 631.1 199.7ZM650.4 204.9 653.4 207.0 660.7 206.0 662.8 200.7 665.9 200.1 667.2 200.3 670.1 198.0 666.4 194.5 663.9 195.5 661.8 198.7 657.6 202.4 653.4 203.7Z"/><path fill="#9ccf97" d="M620.4 197.4 625.1 198.2 631.1 204.5 638.3 207.0 639.5 211.2 642.9 215.4 642.5 221.2 639.7 221.4 635.1 217.5 632.2 213.3 627.4 205.5ZM641.2 223.3 643.9 221.6 647.7 222.3 652.1 223.5 656.7 223.5 660.7 225.4 655.5 226.7 648.1 225.4 642.9 224.6ZM650.4 204.9 653.4 207.0 660.7 206.0 662.8 200.7 665.9 200.1 667.2 200.3 668.0 203.9 667.0 208.1 664.9 212.2 664.3 217.0 660.7 217.5 654.4 215.4 651.3 213.3 649.2 209.1ZM671.0 220.6 672.7 220.4 673.3 215.0 675.0 219.1 677.7 220.0 676.0 215.4 679.2 211.2 673.9 212.0 672.2 207.8 682.5 206.0 673.3 206.6 671.2 210.1 669.9 215.4ZM695.3 212.0 698.5 209.9 703.7 216.0 708.9 212.2 716.3 214.5 716.3 228.1 712.1 226.2 709.4 220.2 704.1 218.5 699.1 217.7 697.2 215.0ZM661.8 226.0 670.1 227.5 676.4 227.1 682.7 226.9 686.9 226.7 682.7 229.0 672.2 230.0 665.9 228.3ZM685.9 204.9 690.3 204.9 690.1 210.1 688.0 208.1ZM692.2 215.0 695.3 215.8 693.2 216.6 689.4 216.4Z"/><path fill="#9ccf97" d="M673.3 170.4 676.9 170.4 677.5 173.6 675.4 176.7 676.4 179.8 680.6 181.9 678.5 180.9 675.4 180.7 673.5 178.8 672.9 175.7ZM676.4 188.2 684.8 189.2 685.9 193.4 683.8 196.6 680.6 194.5 676.4 194.5 679.6 191.3ZM680.6 183.0 683.8 184.0 682.7 188.2 681.0 186.1ZM668.0 190.3 671.2 187.2 671.2 185.7 666.4 191.8Z"/><path fill="#f2f7f1" d="M716.3 214.5 722.6 217.0 726.8 220.6 730.5 222.7 731.0 225.8 735.2 230.6 728.9 230.0 724.7 225.4 721.5 227.9 716.3 228.1ZM735.2 220.6 739.3 217.9 738.3 221.6 732.0 221.6Z"/><path fill="#f2f7f1" d="M682.5 227.7 687.5 226.7 684.8 228.7 682.7 229.0Z"/><path fill="#286b28" d="M657.9 263.8 658.8 256.1 663.9 252.6 670.1 250.7 675.4 247.8 677.1 244.6 679.6 243.6 682.7 240.4 686.9 238.4 690.5 240.2 692.2 240.4 693.6 236.1 696.4 234.8 699.5 233.1 703.7 234.6 707.5 234.2 705.6 239.4 706.8 241.9 712.5 245.5 715.9 245.5 717.5 240.4 717.5 236.1 719.4 231.5 721.5 235.9 723.6 239.0 725.5 240.2 727.4 248.6 732.6 251.9 736.2 256.1 740.4 261.4 741.7 263.4 742.7 268.9 741.7 273.9 739.3 277.9 737.2 281.2 735.2 286.4 731.0 288.1 727.4 290.8 722.6 289.1 717.3 289.4 713.8 287.1 713.1 284.1 710.0 283.5 710.0 280.2 708.9 282.2 705.8 282.2 709.6 278.1 705.6 281.8 701.6 277.9 695.3 274.9 686.9 276.6 680.6 279.1 674.3 279.7 668.0 282.2 661.8 280.8 663.2 278.7 663.2 274.9 661.8 270.8 660.3 267.6ZM724.0 294.2 731.6 294.6 731.0 297.9 728.4 300.2 725.3 297.5Z"/><path fill="#5aab5a" d="M782.8 281.2 786.1 282.9 788.6 286.4 790.1 287.9 794.9 287.9 791.8 291.0 791.3 292.7 788.2 296.0 786.7 295.2 787.6 292.3 785.1 291.0 786.7 288.5 786.5 285.6 783.4 282.7ZM782.8 293.7 786.1 295.4 783.8 299.0 779.6 302.1 778.3 305.0 775.0 306.5 769.8 305.4 773.5 301.1 778.3 298.8Z"/><path fill="#f2f7f1" d="M764.5 251.3 770.8 255.7 769.8 255.5 764.9 252.2Z"/><path fill="#f2f7f1" d="M792.4 245.7 794.9 245.3 794.7 247.1 792.4 246.7Z"/><path fill="#f2f7f1" d="M770.0 239.6 771.2 241.5 770.2 241.7Z"/><path fill="#f2f7f1" d="M749.8 223.7 755.7 226.9 755.1 225.8ZM757.2 228.5 760.9 231.5 759.3 229.6Z"/><path fill="#f2f7f1" d="M723.8 181.5 724.7 180.7 724.2 180.5ZM708.7 189.9 709.6 189.0 708.9 188.8ZM752.1 194.9 752.8 194.5 752.3 194.3ZM762.2 198.2 762.6 197.8 762.2 197.8ZM782.5 203.7 783.4 204.1 784.2 212.9 783.6 213.1ZM106.7 245.7 107.7 246.3 106.9 246.5ZM60.1 237.9 61.2 238.4 60.5 238.6ZM53.0 253.2 53.6 253.4 53.2 253.6Z"/><path fill="#f2f7f1" d="M93.7 166.9 95.6 167.9 94.3 169.6 93.3 167.9ZM92.0 165.4 93.5 165.6 92.4 166.0ZM88.6 164.0 89.9 164.6 88.9 164.6ZM85.5 162.7 86.5 162.9 85.9 163.3Z"/><path fill="#f2f7f1" d="M536.4 252.8 537.6 253.2 537.0 253.8ZM540.8 250.9 541.8 251.5 541.2 251.9ZM511.2 232.9 511.8 234.0 511.4 234.0Z"/><path fill="#f2f7f1" d="M367.5 173.6 368.6 174.0 368.0 174.4ZM370.9 177.1 371.5 178.0 370.9 178.0Z"/><path fill="#f2f7f1" d="M385.4 149.5 386.6 149.7 385.8 150.6ZM387.5 150.2 388.3 150.8 387.7 151.0ZM390.2 149.1 391.7 149.5 390.6 150.6Z"/></g><g fill="none" stroke="#f0a00c" stroke-width="1.6" stroke-linejoin="round"><path stroke-width="1.6" d="M124.9 63.5 122.6 61.3 119.7 62.6 116.5 64.2 113.5 60.8 110.2 62.2 107.4 62.0 104.6 61.5 101.9 60.9 98.7 60.0 95.4 60.2 92.2 60.1 88.5 60.3 85.1 61.5 82.4 63.9 78.8 63.4 75.3 63.6 72.1 65.1 74.0 67.0 76.7 67.6 77.3 69.9 73.9 69.1 71.0 70.3 68.1 72.0 72.5 74.3 75.2 72.6 77.8 73.4 80.3 76.3 83.0 74.5 79.8 76.4 76.8 76.5 74.6 78.5 73.5 81.4 75.7 83.6 78.8 83.7 80.9 85.8 83.6 86.5 86.4 87.6 89.3 86.6 91.4 87.9 90.3 91.0 87.2 92.1 83.8 92.4 80.9 94.2 78.2 96.0 75.0 95.4 78.5 94.2 81.9 92.9 86.0 92.7 89.3 90.4 92.2 89.6 95.1 89.0 97.7 87.3 102.1 85.4 104.3 83.5 106.1 81.2 109.2 82.7 114.0 81.6 118.6 83.7 121.8 84.5 124.9 83.7 128.1 84.5 132.3 86.6 135.4 88.9 138.6 92.1 141.7 94.2 146.7 94.8 148.0 92.3 144.2 90.8 140.9 87.0 137.5 84.1 134.4 84.7 132.3 85.4 128.9 83.0 124.9 83.1"/><path stroke-width="1.9" d="M244.5 57.8 247.4 59.3 250.3 57.0 253.3 59.3 256.2 56.7 259.1 57.8 262.0 58.0 265.1 57.1 267.1 60.9 269.9 61.2 272.8 61.3 275.7 61.2 278.2 62.8 280.6 63.9 281.6 67.6 284.9 67.0 286.4 69.8 291.0 66.8 292.1 70.3 289.1 73.0 285.1 73.2 283.7 76.7 282.6 80.4 278.8 81.6 275.6 80.7 273.0 77.6 268.8 78.0 267.0 74.6 264.4 72.4 261.5 73.0 258.6 73.4 255.8 74.3 255.6 70.5 259.1 69.1 255.5 69.6 253.3 68.1 252.2 64.7 249.5 62.8 246.1 62.8 243.8 60.8 244.5 57.8M156.6 58.6 157.2 54.9 161.0 54.6 163.9 55.1 166.9 52.2 169.8 53.9 172.8 54.1 175.7 55.1 172.1 55.5 172.1 59.0 168.6 57.5 165.9 60.9 162.7 60.7 160.2 58.1 156.6 58.6M170.4 57.6 173.0 57.4 175.6 56.8 178.4 58.5 180.8 56.7 183.4 56.3 186.5 56.2 189.4 58.5 192.6 54.5 195.6 56.7 197.8 58.9 200.8 59.3 203.6 60.3 207.3 60.1 207.8 63.8 205.0 66.3 201.9 66.6 198.6 64.6 195.6 65.5 192.7 64.6 190.0 67.5 187.3 68.5 184.3 66.4 181.2 65.4 177.8 65.3 174.8 63.8 171.3 61.1 170.4 57.6M162.2 49.8 165.5 51.9 168.2 50.5 170.6 46.9 174.0 49.7 176.5 47.3 179.2 48.6 182.5 45.7 184.9 49.2 187.7 49.6 190.4 51.0 193.8 47.9 196.5 48.8 199.2 50.7 195.6 53.4 192.8 53.8 190.0 51.7 187.2 52.1 184.3 54.5 181.5 55.3 178.7 55.2 175.9 53.7 173.2 53.0 171.0 50.4 168.0 51.2 164.8 53.6 162.7 50.7 162.2 49.8M198.7 44.2 201.8 45.0 204.7 42.8 207.8 43.4 211.2 41.6 213.9 44.2 216.6 46.3 219.9 45.5 216.5 46.5 213.0 47.3 209.7 49.2 207.0 45.5 203.7 47.4 200.8 45.9 198.7 44.2M203.6 49.8 206.0 47.5 208.9 51.2 211.4 49.4 214.0 49.7 216.6 48.6 218.9 51.1 222.0 51.5 225.2 51.5 221.5 52.3 218.2 54.2 215.0 56.3 212.3 51.7 209.1 54.4 206.1 53.4 203.6 49.8M222.0 44.2 224.3 42.6 226.5 41.1 228.8 39.8 231.4 39.2 235.0 42.2 237.4 40.8 239.6 39.4 242.1 38.5 244.5 37.3 247.3 38.1 250.0 36.5 252.8 37.0 255.6 37.5 258.4 38.1 261.0 34.8 264.0 38.4 266.6 35.9 269.3 34.0 272.1 35.2 274.8 36.3 278.3 34.3 280.6 37.1 282.8 40.4 286.2 38.8 282.8 38.3 281.1 42.2 277.1 40.4 274.2 41.1 272.1 44.2 269.5 45.6 266.0 43.7 263.7 46.2 261.3 48.2 258.3 48.4 255.5 49.2 253.5 52.4 249.4 49.1 247.3 51.9 244.5 52.6 241.7 51.1 238.7 53.4 235.8 53.9 233.2 51.9 230.4 51.3 228.8 49.0 227.1 46.8 223.8 46.3 222.0 44.2M230.4 49.2 233.3 50.3 236.2 51.2 239.0 49.9 241.5 47.1 244.6 49.8 247.2 46.9 250.2 49.1 252.8 47.1 255.6 51.3 252.2 50.7 249.2 51.1 246.6 52.8 244.5 55.5 241.4 54.3 238.1 56.3 235.2 52.3 231.9 54.4 230.0 52.1 230.4 49.2M203.6 56.7 206.3 57.5 209.0 57.8 211.7 58.2 214.0 55.8 216.6 55.1 219.8 52.9 222.1 57.6 225.0 58.1 228.5 54.5 231.4 54.8 234.0 57.6 231.4 59.1 230.4 62.0 227.6 61.8 224.8 62.6 222.2 60.3 219.4 59.5 216.6 61.1 213.6 61.0 211.0 58.5 207.8 59.5 203.6 56.7M220.8 62.8 223.3 61.6 225.9 60.1 228.6 60.2 231.2 60.8 234.0 62.0 236.5 62.9 239.3 62.8 241.8 64.1 244.9 63.0 247.0 65.5 243.0 66.6 242.6 70.7 239.8 72.9 237.4 69.6 234.7 70.6 232.2 69.8 229.6 69.9 226.4 67.7 222.6 67.2 220.8 62.8M239.2 71.6 242.9 69.7 246.5 71.6 248.4 74.7 251.8 75.8 248.8 75.5 246.0 76.2 243.4 77.8 240.1 76.9 237.1 75.3 239.2 71.6M296.0 109.6 296.0 105.9 298.7 104.7 301.4 103.4 303.2 101.3 304.4 105.6 308.2 106.5 310.3 109.8 308.4 111.7 304.2 110.7 300.9 112.4 298.1 109.8 296.0 109.6M162.0 108.2 157.4 106.9 153.2 106.8 151.6 102.9 154.3 102.7 157.3 104.5 160.6 105.6 162.0 108.2M140.9 87.0 137.5 84.1 134.4 84.7M134.4 65.1 136.5 62.6 139.6 63.6 142.9 64.9 146.0 64.7 149.0 62.8 152.3 61.9 155.3 63.7 158.5 63.8 160.9 66.1 163.8 63.6 166.2 66.5 169.0 64.9 171.8 64.5 174.1 66.5 176.6 67.3 179.4 67.0 182.5 68.5 185.3 66.8 188.4 68.1 191.2 66.1 194.1 65.9 197.0 65.7 199.7 66.5 202.5 67.0 205.6 68.4 208.9 65.6 212.0 67.1 215.1 67.4 219.3 65.9 223.5 63.8 225.9 66.0 229.3 64.4 231.9 65.9 234.5 67.7 237.3 68.1 240.3 67.0 243.4 63.8 246.0 64.3 248.6 64.9 249.7 69.1 247.1 69.4 244.7 71.7 242.0 71.8 239.2 70.1 238.2 73.2 235.0 72.6 232.7 74.0 230.8 76.4 229.1 79.2 227.2 81.7 223.5 81.6 223.1 85.8M260.0 88.9 257.0 86.2 258.1 83.7 257.0 78.9 259.8 80.4 262.6 78.6 265.4 78.9 268.1 80.2 270.7 81.6 272.3 84.2 274.9 85.8 277.3 87.4 280.1 86.8 284.3 84.1 285.3 83.1"/><path stroke-width="1.7" d="M272.1 45.9 275.5 45.5 277.4 42.1 281.2 42.6 283.7 40.4 286.7 40.6 288.8 37.4 291.9 37.5 294.8 37.1 297.6 37.6 300.5 38.2 303.2 37.0 306.1 38.1 308.6 34.5 311.5 35.6 314.1 33.2 316.9 33.1 319.8 34.4 322.7 35.0 325.4 37.1 328.2 34.6 331.0 33.2 333.7 36.1 336.5 35.2 339.3 34.1 342.0 36.1 344.8 33.8 347.6 32.6 350.4 35.0 353.0 33.9 355.5 36.5 358.4 33.4 361.0 34.0 363.6 34.9 366.2 35.3 368.8 35.0 371.4 37.2 374.0 36.3 377.0 35.4 379.6 37.0 382.7 35.3 385.5 35.4 387.9 39.0 390.9 37.6 393.5 39.0 390.8 39.8 388.3 41.6 384.8 40.0 383.0 44.0 379.8 43.4 377.0 44.0 379.6 45.9 381.0 48.8 379.4 51.5 375.3 51.1 374.0 54.2 371.4 54.7 368.8 55.3 366.3 56.2 364.4 58.4 367.4 60.2 370.3 62.2 374.0 62.0 371.3 62.9 368.2 61.4 365.7 63.6 363.3 65.8 360.2 65.0 357.2 63.9 354.5 64.9 351.8 66.1 348.1 67.3 344.9 69.7 341.6 69.9 338.5 70.8 336.5 73.6 333.8 75.1 331.4 77.3 328.1 78.9 328.1 82.9 325.1 83.5 323.0 79.5 320.0 80.2 317.0 80.8 315.2 78.0 311.4 76.5 311.6 72.4 308.4 71.2 308.0 68.3 307.4 65.5 305.6 62.9 304.6 59.9 304.1 56.8 301.6 55.3 299.5 53.5 297.5 51.7 294.5 52.5 292.1 50.1 288.8 52.5 286.3 50.9 283.9 48.3 280.9 48.8 277.6 49.1 275.3 46.3 272.1 45.9"/><path stroke-width="1.6" d="M369.2 72.2 372.3 72.6 374.5 70.3 377.2 71.6 380.1 70.3 382.9 70.7 386.6 71.9 390.2 70.5 392.3 73.2 389.1 74.7 386.4 74.7 384.0 76.1 381.4 76.6 378.5 76.8 375.7 76.7 373.0 75.8 370.3 73.7 369.2 72.2"/><path stroke-width="1.6" d="M276.7 319.0 278.7 321.3 281.9 321.7 284.1 323.6 280.1 324.0 276.7 323.8 276.7 319.0"/><path stroke-width="1.6" d="M265.6 296.5 264.8 299.8 263.5 302.4 264.4 305.2 263.0 307.7 262.3 310.5 263.4 313.5 263.3 316.7 265.4 319.9 267.9 321.1 270.7 321.5 273.8 319.9 277.2 318.4 273.4 319.0 269.8 317.8 269.0 315.1 266.9 312.1 268.8 309.2 269.8 306.9 270.2 303.1 270.5 300.0 270.0 297.1M276.7 319.0 276.7 323.8 272.8 324.0 270.9 321.2 267.5 320.9 270.6 320.0 273.8 319.5 276.7 319.0"/><path stroke-width="1.6" d="M435.3 87.9 438.4 87.3 442.6 85.4 444.5 85.8 446.2 82.7 446.4 80.1 446.0 77.4 450.0 74.5 451.0 71.8 452.1 68.8 455.2 68.0 458.3 65.9 461.3 66.7 463.7 64.8 466.7 65.9 470.9 65.5 474.7 63.6 479.1 62.6 481.2 64.8 485.4 63.6 485.6 62.2 482.2 62.5 479.3 60.7 474.7 60.3 471.4 61.5 468.3 63.0 464.6 62.4 461.6 63.5 458.3 63.2 455.8 65.9 452.1 65.9 449.1 66.4 447.9 69.1 445.8 72.2 443.6 73.7 441.6 75.3 438.7 75.7 436.3 77.4 434.3 79.9 431.1 79.5 431.1 83.7 432.1 86.0 435.3 87.9"/><path stroke-width="1.6" d="M417.2 92.9 415.4 92.1 416.8 88.9 414.3 86.6 410.1 86.6 407.6 88.9 408.9 91.4 408.4 93.5 410.1 94.6 413.7 94.4 414.3 94.2 416.0 92.7 417.2 92.9"/><path stroke-width="1.6" d="M489.8 64.3 492.9 65.9 496.1 64.7 498.3 66.8 501.4 65.9 504.1 66.3 506.6 67.6 505.5 70.3 502.7 69.5 500.3 71.2 496.9 70.4 493.6 71.4 494.0 74.3M505.5 74.3 507.9 72.8 508.7 70.1 512.9 71.2 513.5 66.4 516.1 66.6 518.8 66.4 521.3 67.6 523.8 67.0 526.6 67.9 529.0 66.0 531.7 66.4 535.9 65.9 538.7 65.7 541.5 66.3 544.3 65.9 548.5 63.2 551.2 63.1 553.8 63.3 556.4 63.6 559.0 63.8 563.2 66.6 565.3 62.8 562.1 59.7 565.6 59.9 568.3 57.4 571.6 56.9 574.7 59.7 575.4 63.8 572.6 67.0 575.8 67.2 577.9 64.9 575.8 61.5 575.8 57.6 578.5 58.2 581.3 59.2 584.2 58.0 587.0 57.1 589.4 55.5 592.0 54.5 594.7 53.8 597.5 51.9 600.3 53.0 603.0 54.0 606.4 54.3 608.9 50.6 612.4 51.3 615.6 51.1 618.4 52.0 621.0 51.9 623.3 48.8 626.1 50.1 628.9 50.5 631.1 47.5 633.8 47.5 636.9 49.2 639.3 47.5 641.4 50.2 644.8 47.7 647.1 49.6 649.3 52.5 653.1 50.9 655.2 54.0 658.6 53.6 661.5 55.6 664.8 55.6 668.0 55.9 670.9 56.7 673.8 56.7 676.7 57.4 679.7 55.3 682.6 56.7 685.5 56.9 687.9 57.8 689.7 60.6 692.4 61.0 695.3 60.7 698.1 58.5 701.2 60.5 704.1 60.0 707.2 61.1 710.0 59.5 712.7 60.5 715.2 57.3 718.0 60.0 720.6 59.8 723.2 57.4 725.9 59.0 728.6 59.6 731.1 61.1 734.0 59.6 736.6 60.7 739.3 60.7 742.0 61.2 744.8 61.1 747.6 60.5 749.9 63.5 752.9 61.9 755.5 63.0 758.2 64.9 761.0 63.5 763.8 63.2 766.6 63.6 769.3 65.2 771.8 62.5 774.5 64.3 777.1 63.0 779.9 62.1 782.1 65.2 784.9 64.7 787.6 64.5 790.1 65.3 792.8 64.9 795.6 63.4 798.1 65.3 798.7 68.0 799.1 70.6 798.1 73.2 793.9 74.3M43.1 65.3 45.4 67.2 47.9 68.5 51.4 65.8 53.6 68.0 56.4 68.8 59.7 67.6 62.0 70.1 64.7 71.0 61.0 73.2 57.8 74.7 55.2 74.6 52.6 73.7 50.0 72.8 47.3 74.3 43.1 73.2 42.2 70.6 41.5 68.0 43.1 65.3M530.7 60.1 533.5 59.2 535.8 62.0 538.4 62.0 541.2 61.5 539.0 59.4 538.0 56.5 541.1 55.2 544.5 54.5 546.4 51.3 549.4 49.6 552.6 49.6 555.8 49.6 559.0 50.3 562.5 50.2 565.3 48.2 562.7 49.6 560.0 48.3 557.5 49.9 554.8 48.6 551.8 49.8 548.7 50.9 545.4 50.9 542.2 51.3 538.7 51.3 536.4 53.6 533.8 55.5 531.0 56.7 528.6 58.6 530.7 60.1M615.6 42.9 618.4 44.7 621.5 43.0 624.5 42.5 627.5 42.4 630.3 44.0 633.0 45.1 635.7 46.2 638.7 45.0 636.5 42.4 633.6 41.3 630.3 40.9 627.8 39.4 624.9 42.2 622.4 40.9 619.8 39.8 617.8 41.5 615.6 42.9M707.9 51.3 710.6 52.4 713.2 51.5 715.7 49.9 718.4 50.3 720.9 51.1 723.9 49.3 726.0 52.8 728.9 51.9 725.9 51.6 723.6 53.4 720.7 53.0 718.4 54.9 714.9 55.3 712.1 53.4 707.9 51.3M718.4 113.0 718.6 110.2 721.0 108.3 721.5 105.6 721.7 102.2 720.5 98.9 719.8 95.6 717.7 97.3 718.6 100.0 716.6 103.0 718.6 105.6 717.0 109.3 718.4 113.0"/></g><rect x="33.19999999999999" y="20.799999999999997" width="20.8" height="65" rx="10.4" fill="#004200"/><rect x="22.100000000000023" y="42.900000000000006" width="42.9" height="22.1" rx="11" fill="#004200"/><path fill="#fff" d="M43.5 25.9 L49.7 37.0 L37.3 37.0Z M26.8 54.0 L37.8 47.6 L37.8 60.3Z M60.4 54.0 L49.7 47.6 L49.7 60.3Z M37.3 71.0 L49.7 71.0 L43.5 81.2Z"/><rect x="33" y="92.1" width="20.9" height="64.6" rx="9" fill="#004200"/><path fill="#fff" d="M37.7 103.1 h11.5 v2.2 h-11.5Z M42.4 98.0 h2.4 v12 h-2.4Z M37.7 143.5 h11.5 v2.4 h-11.5Z"/><g fill="none" stroke="#9a9ae8" stroke-width="0.9"><circle cx="43.69999999999999" cy="124" r="9.6" stroke-width="1.2"/><ellipse cx="43.69999999999999" cy="124" rx="4.5" ry="9.6"/><path d="M34.09999999999999 124 h19.2 M35.39999999999999 119.5 h16.6 M35.39999999999999 128.5 h16.6"/><rect x="41.09999999999999" y="121.4" width="5.2" height="5.2"/></g></svg><!--/MAP-->
</div>

<!-- legend -->
<div style="position:absolute;left:306px;top:434px;width:179px;height:24px;background:linear-gradient(90deg,#ffffff 0%,#e6f2e3 18%,#bcdcb7 38%,#8fc38b 55%,#5fa85f 70%,#2e8c2e 80%,#0b7a0b 88%,#004000 100%)"></div>
<div class="a" style="left:305.5px;top:434px;font-size:14.5px;color:#1a1a1a">0</div>
<div class="a" style="left:412.5px;top:434px;font-size:14.5px;color:#1a1a1a">80,288</div>

<div style="position:absolute;left:293px;top:470px;width:858px;height:1px;background:#d8d8d8"></div>
<div class="a b" style="left:317.5px;top:482px;font-size:16.85px;color:#2b2b2b">Report View by Selection</div>
<div class="a b blue" style="left:1041px;top:482px;font-size:16.8px">Customize</div>
<div style="position:absolute;left:293px;top:513px;width:858px;height:1px;background:#cfcfcf"></div>

<!-- table header -->
<div style="position:absolute;left:293px;top:514px;width:852px;height:47px;background:#f3f3f3"></div>
<div class="a hd" style="left:310px;top:517px">Total:</div>
<div class="a hd" style="left:306px;top:536.5px">9717</div>
<div class="a hd" style="left:407px;top:527px">Institutions</div>
<div class="a hd" style="left:544.5px;top:527px">Countries/Regions</div>
<div class="a hd" style="left:715px;top:517px">Web of Science</div>
<div class="a hd" style="left:725px;top:536.5px">Documents</div>
<div class="a hd" style="left:884px;top:527px;color:#4a78a8">Cites</div>
<svg class="a" style="left:930.5px;top:532.5px" width="10" height="6"><path d="M0 0 L9.5 0 L4.75 5.5Z" fill="#6a9ad0"/></svg>
<div class="a hd" style="left:1002.5px;top:527px">Cites/Paper</div>

<!-- rows -->
<div style="position:absolute;left:1126px;top:578px;width:19px;height:363px;background:#fbfbfb"></div>
<svg class="a" style="left:1130px;top:584px" width="11" height="8"><path d="M0 7 L5.5 0 L11 7Z" fill="#a3a3a3"/></svg>
<div class="a" style="left:1131px;top:792px;width:9px;height:21px;border-radius:4.5px;background:#878787"></div>
<!--ROWS--><div class="row" style="top:578px;height:133px"></div>
<div class="a num" style="left:324px;top:633.9px">5832</div>
<div class="a num" style="right:304.0px;top:633.9px">1,224</div>
<div class="a num" style="right:172.4px;top:633.9px">20,406</div>
<div class="a num" style="right:32.0px;top:633.9px">16.67</div>
<div class="a inst" style="left:389px;top:580.3px;line-height:normal">SETH</div>
<div class="a inst" style="left:389px;top:595.9px;line-height:normal">GORDHANDAS</div>
<div class="a inst" style="left:389px;top:611.4px;line-height:normal">SUNDERDAS</div>
<div class="a inst" style="left:389px;top:627.0px;line-height:normal">MEDICAL</div>
<div class="a inst" style="left:389px;top:642.6px;line-height:normal">COLLEGE &amp;</div>
<div class="a inst" style="left:389px;top:658.1px;line-height:normal">KING EDWARD</div>
<div class="a inst" style="left:389px;top:673.7px;line-height:normal">MEMORIAL</div>
<div class="a inst" style="left:389px;top:689.2px;line-height:normal">HOSPITAL</div>
<div class="a ctry" style="left:555px;top:633.9px">INDIA</div>
<div class="row" style="top:711px;height:56px"></div>
<div class="a num" style="left:324px;top:729.6px">5833</div>
<div class="a num" style="right:304.0px;top:729.6px">1,676</div>
<div class="a num" style="right:172.4px;top:729.6px">20,387</div>
<div class="a num" style="right:32.0px;top:729.6px">12.16</div>
<div class="a inst" style="left:389px;top:715.5px;line-height:normal">HUNAN</div>
<div class="a inst" style="left:389px;top:731.1px;line-height:normal">INSTITUTE OF</div>
<div class="a inst" style="left:389px;top:746.6px;line-height:normal">ENGINEERING</div>
<div class="a ctry" style="left:555px;top:721.3px">CHINA</div>
<div class="a ctry" style="left:555px;top:737.3px">MAINLAND</div>
<div class="row" style="top:767px;height:56px"></div>
<div class="a num" style="left:324px;top:785.4px">5834</div>
<div class="a num" style="right:304.0px;top:785.4px">1,252</div>
<div class="a num" style="right:172.4px;top:785.4px">20,375</div>
<div class="a num" style="right:32.0px;top:785.4px">16.27</div>
<div class="a inst" style="left:389px;top:770.8px;line-height:normal">UNIVERSIDAD</div>
<div class="a inst" style="left:389px;top:786.4px;line-height:normal">DE</div>
<div class="a inst" style="left:389px;top:801.9px;line-height:normal">MAGALLANES</div>
<div class="a ctry" style="left:555px;top:785.4px">CHILE</div>
<div class="row" style="top:823px;height:71px"></div>
<div class="a num" style="left:324px;top:849.8px">5835</div>
<div class="a num" style="right:304.0px;top:849.8px">1,873</div>
<div class="a num" style="right:172.4px;top:849.8px">20,349</div>
<div class="a num" style="right:32.0px;top:849.8px">10.86</div>
<div class="a inst" style="left:389px;top:826.4px;line-height:normal">KOREA</div>
<div class="a inst" style="left:389px;top:842.0px;line-height:normal">INSTITUTE OF</div>
<div class="a inst" style="left:389px;top:857.5px;line-height:normal">FUSION ENERGY</div>
<div class="a inst" style="left:389px;top:873.1px;line-height:normal">(KFE)</div>
<div class="a ctry" style="left:555px;top:849.8px">SOUTH KOREA</div>
<div class="row" style="top:894px;height:32px"></div>
<div class="a num" style="left:324px;top:900.4px">5836</div>
<div class="a num" style="right:304.0px;top:900.4px">48</div>
<div class="a num" style="right:172.4px;top:900.4px">20,340</div>
<div class="a num" style="right:32.0px;top:900.4px">423.75</div>
<div class="a inst" style="left:389px;top:901.0px;line-height:normal">NATL STAT OFF</div>
<div class="a ctry" style="left:555px;top:900.4px">N/A</div>
<div class="row" style="top:926px;height:75px"></div>
<div class="a inst" style="left:389px;top:928.1px;line-height:normal">SHEFFIELD</div><!--/ROWS-->
</body></html>
